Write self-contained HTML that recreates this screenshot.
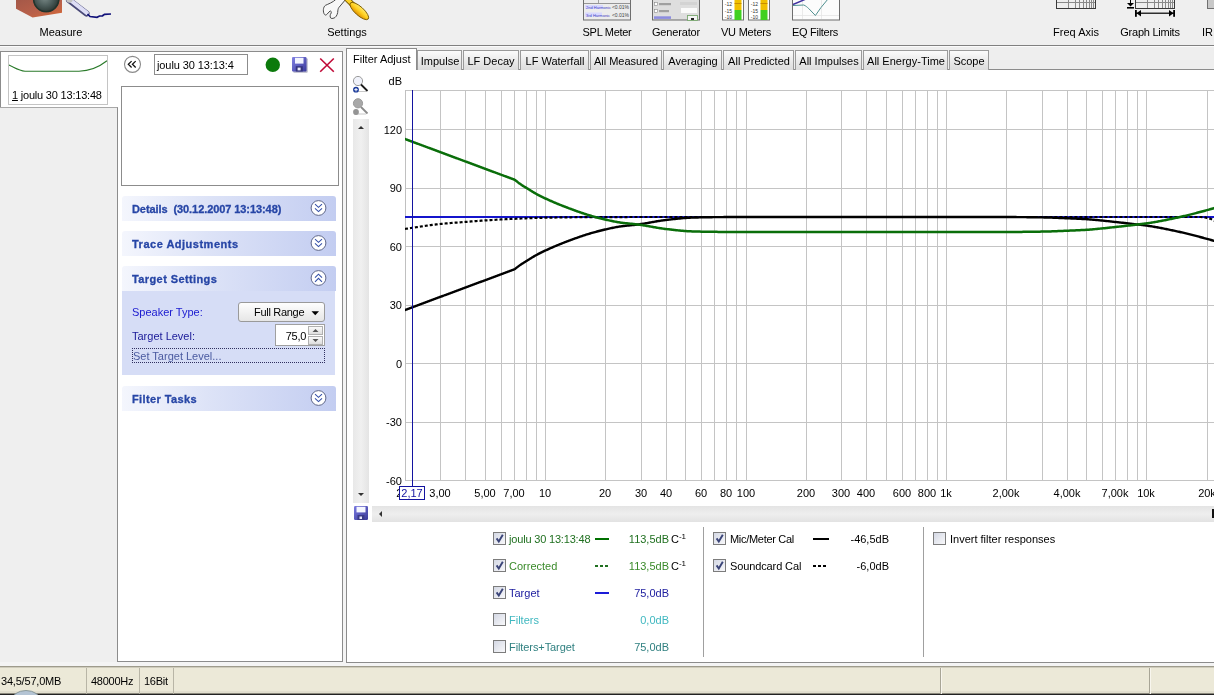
<!DOCTYPE html>
<html><head><meta charset="utf-8"><style>
html,body{margin:0;padding:0;width:1214px;height:695px;overflow:hidden;background:#efefef;position:relative;font-family:"Liberation Sans", sans-serif}
.t{position:absolute;white-space:nowrap;font-family:"Liberation Sans", sans-serif;will-change:transform}
</style></head><body>
<div style="position:absolute;left:0px;top:0px;width:1214px;height:45px;background:#efefef"></div>
<div style="position:absolute;left:0px;top:45px;width:1214px;height:1px;background:#808080"></div>
<div style="position:absolute;left:0px;top:46px;width:1214px;height:620px;background:#f4f4f4"></div>
<div style="position:absolute;left:0px;top:46px;width:1214px;height:1px;background:#fbfbfb"></div>
<div style="position:absolute;left:0px;top:47px;width:1214px;height:4px;background:#ececec"></div>
<div style="position:absolute;left:346px;top:47px;width:868px;height:22px;background:#eeeeee"></div>
<div style="position:absolute;left:0px;top:666px;width:1214px;height:28px;background:#ece9d8"></div>
<div style="position:absolute;left:0px;top:666px;width:1214px;height:1px;background:#9e9b8c"></div>
<div style="position:absolute;left:0px;top:667px;width:1214px;height:1px;background:#cfccbc"></div>
<div style="position:absolute;left:0px;top:691px;width:1214px;height:2px;background:#e2dfcf"></div>
<div style="position:absolute;left:0px;top:693px;width:1214px;height:1px;background:#8a887c"></div>
<div style="position:absolute;left:0px;top:694px;width:1214px;height:1px;background:#222"></div>
<svg style="position:absolute;left:0;top:685px" width="60" height="10"><ellipse cx="26" cy="16" rx="14.5" ry="10.5" fill="#b4c4d4" stroke="#7a8a8a" stroke-width="0.8"/></svg>

<svg style="position:absolute;left:0;top:0" width="1214" height="45">
 <defs>
  <linearGradient id="box" x1="0" y1="0" x2="1" y2="1">
   <stop offset="0" stop-color="#a45848"/><stop offset="0.55" stop-color="#b8604a"/><stop offset="1" stop-color="#d86a36"/></linearGradient>
  <radialGradient id="cone" cx="0.45" cy="0.45" r="0.6">
   <stop offset="0" stop-color="#7a8a88"/><stop offset="0.55" stop-color="#4a5a58"/><stop offset="1" stop-color="#26302c"/></radialGradient>
  <linearGradient id="scr" x1="0" y1="0" x2="0" y2="1">
   <stop offset="0" stop-color="#ffe868"/><stop offset="0.5" stop-color="#ffd020"/><stop offset="1" stop-color="#e09000"/></linearGradient>
 </defs>
 <!-- speaker -->
 <path d="M16 0 L16 8.8 L32.6 17.4 L62 12.8 L62 0 Z" fill="url(#box)"/>
 <circle cx="46.2" cy="-1" r="13.2" fill="url(#cone)"/>
 <circle cx="46.2" cy="-1" r="12.6" fill="none" stroke="#22342c" stroke-width="1.4"/>
 <!-- mic -->
 <path d="M69 0 L86.5 13.5" stroke="#4a4a78" stroke-width="6" stroke-linecap="round"/>
 <path d="M69.5 -0.5 L86.8 12.8" stroke="#dedef6" stroke-width="4" stroke-linecap="round"/>
 <circle cx="69.5" cy="-0.5" r="3.2" fill="#c4c4c4"/>
 <path d="M87.5 14 L90 16.5 L97 17.3 L99.5 16 L102.5 15.8 L104.5 14.3 L111 14" fill="none" stroke="#12127a" stroke-width="1.7"/>
 <!-- settings: wrench -->
 <path d="M336.3 -1 C333 2.5 328 4 325.4 5.4 C323 7 322.8 12 324.4 14.3 C325 15.2 326 15.3 326.6 14.6 L330.2 10.8 C331 11.2 331.6 12 331.2 13 C330 15 329.6 16.8 330.9 18.2 C332 18.8 334 18.2 335 17.5 C337 16 337.8 13 337.8 10.9 C338 9 338.5 7.8 339.3 7 L346 -1 Z" fill="#f8f8f8" stroke="#4a4a4a" stroke-width="1"/>
 <!-- screwdriver -->
 <path d="M345 -3 L354 6" stroke="#7a5a00" stroke-width="5.6" stroke-linecap="round"/>
 <path d="M345 -3 L354 6" stroke="#ffd428" stroke-width="3.8" stroke-linecap="round"/>
 <ellipse cx="359.3" cy="11" rx="12" ry="4.3" transform="rotate(42 359.3 11)" fill="url(#scr)" stroke="#7a5a00" stroke-width="0.9"/>
 <!-- SPL meter -->
 <rect x="583.5" y="-2" width="47" height="22" fill="#ececec" stroke="#6e6e6e"/>
 <rect x="584" y="3" width="46" height="0.8" fill="#808080"/>
 <rect x="598" y="-2" width="0.8" height="5" fill="#909090"/>
 <rect x="585" y="5" width="18" height="4" fill="#d8d8ff"/>
 <rect x="585" y="12.5" width="17" height="4" fill="#d8d8ff"/>
 <text x="586" y="9" font-family="Liberation Sans" font-size="4" fill="#4040c0">2nd Harmonic</text>
 <text x="586" y="16.5" font-family="Liberation Sans" font-size="4" fill="#4040c0">3rd Harmonic</text>
 <text x="629" y="9" font-family="Liberation Sans" font-size="5" fill="#404040" text-anchor="end">&lt;0.01%</text>
 <text x="629" y="16.5" font-family="Liberation Sans" font-size="5" fill="#404040" text-anchor="end">&lt;0.01%</text>
 <!-- generator -->
 <rect x="652.5" y="-2" width="47" height="22" fill="#dedede" stroke="#6a6a6a"/>
 <rect x="654.5" y="2.5" width="3" height="3" fill="#fff" stroke="#8a8a8a" stroke-width="0.6"/>
 <rect x="654.5" y="9.5" width="3" height="3" fill="#fff" stroke="#8a8a8a" stroke-width="0.6"/>
 <rect x="659" y="3" width="12" height="2.2" fill="#555" opacity="0.45"/>
 <rect x="659" y="10" width="10" height="2.2" fill="#555" opacity="0.45"/>
 <rect x="654" y="16.3" width="17" height="2.6" fill="#4848e0" opacity="0.55"/>
 <rect x="680" y="2" width="17" height="3" fill="#cfcfcf" opacity="0.8"/>
 <rect x="681" y="8" width="16" height="5" fill="#fafafa"/>
 <rect x="687.5" y="15.5" width="10" height="5" fill="#f4f4f4" stroke="#7aa870" stroke-width="0.9"/>
 <rect x="691" y="18" width="3" height="2" fill="#222"/>
 <!-- VU meters -->
 <rect x="722.5" y="-2" width="21" height="22" fill="#fff" stroke="#707070"/>
 <rect x="734.5" y="-2" width="7" height="12" fill="#f0c000"/>
 <rect x="734.5" y="10" width="7" height="10" fill="#40d020"/>
 <rect x="734.5" y="3" width="7" height="0.8" fill="#c08000"/>
 <rect x="748.5" y="-2" width="21" height="22" fill="#fff" stroke="#707070"/>
 <rect x="760.5" y="-2" width="7" height="12" fill="#f0c000"/>
 <rect x="760.5" y="10" width="7" height="10" fill="#40d020"/>
 <rect x="760.5" y="3" width="7" height="0.8" fill="#c08000"/>
 <text x="732" y="6" font-family="Liberation Sans" font-size="5" fill="#333" text-anchor="end">-12</text>
 <text x="732" y="12.5" font-family="Liberation Sans" font-size="5" fill="#333" text-anchor="end">-15</text>
 <text x="732" y="19" font-family="Liberation Sans" font-size="5" fill="#333" text-anchor="end">-10</text>
 <text x="758" y="6" font-family="Liberation Sans" font-size="5" fill="#333" text-anchor="end">-12</text>
 <text x="758" y="12.5" font-family="Liberation Sans" font-size="5" fill="#333" text-anchor="end">-15</text>
 <text x="758" y="19" font-family="Liberation Sans" font-size="5" fill="#333" text-anchor="end">-10</text>
 <!-- EQ filters -->
 <rect x="792.5" y="-2" width="47" height="22" fill="#fcfcfc" stroke="#6e6e6e"/>
 <path d="M802.5 0 V19 M821.5 0 V19 M793 15.5 H839" stroke="#e4e4e4" stroke-width="0.8"/>
 <path d="M793 4.5 L806 -1" stroke="#4030a0" stroke-width="1.4"/>
 <path d="M793 5.5 L803.8 5 C806 6 807 7 808.7 8.5 L815.4 15.5 L821 7.5 L828 -1" fill="none" stroke="#509090" stroke-width="1"/>
 <!-- Freq axis -->
 <g fill="#3a3a3a">
  <rect x="1056" y="-1" width="1" height="10"/><rect x="1095" y="-1" width="1" height="10"/><rect x="1056" y="8" width="40" height="1"/>
 </g>
 <g fill="#8a8a8a">
  <rect x="1057" y="2" width="38" height="1"/>
  <rect x="1068" y="0" width="1" height="8"/><rect x="1075" y="0" width="1" height="8"/><rect x="1079" y="0" width="1" height="8"/><rect x="1083" y="0" width="1" height="8"/><rect x="1086" y="0" width="1" height="8"/><rect x="1089" y="0" width="1" height="8"/><rect x="1091" y="0" width="1" height="8"/><rect x="1093" y="0" width="1" height="8"/>
 </g>
 <!-- Graph limits -->
 <g fill="#3a3a3a">
  <rect x="1135" y="-1" width="1" height="10"/><rect x="1174" y="-1" width="1" height="10"/><rect x="1135" y="8" width="40" height="1"/>
 </g>
 <g fill="#8a8a8a">
  <rect x="1136" y="2" width="38" height="1"/>
  <rect x="1147" y="0" width="1" height="8"/><rect x="1154" y="0" width="1" height="8"/><rect x="1158" y="0" width="1" height="8"/><rect x="1162" y="0" width="1" height="8"/><rect x="1165" y="0" width="1" height="8"/><rect x="1168" y="0" width="1" height="8"/><rect x="1170" y="0" width="1" height="8"/><rect x="1172" y="0" width="1" height="8"/>
 </g>
 <rect x="1130" y="-1" width="1" height="4" fill="#000"/>
 <path d="M1127 3 L1134 3 L1130.5 6.5 Z" fill="#000"/>
 <rect x="1127" y="7" width="7" height="1.6" fill="#000"/>
 <rect x="1136" y="12.6" width="38" height="1.2" fill="#000"/>
 <rect x="1135" y="10" width="1.8" height="6.8" fill="#000"/>
 <rect x="1173.2" y="10" width="1.8" height="6.8" fill="#000"/>
 <path d="M1136.5 13.2 L1141 10 L1141 16.5 Z" fill="#000"/>
 <path d="M1173.5 13.2 L1169 10 L1169 16.5 Z" fill="#000"/>
 <!-- IR partial -->
 <rect x="1207.5" y="-2" width="10" height="10.5" fill="#c8c8c8" stroke="#707070"/>
</svg>

<div class="t" style="left:-139.5px;width:400px;text-align:center;top:25.36px;font-size:11px;line-height:14px;color:#000;font-weight:400;letter-spacing:0px;">Measure</div>
<div class="t" style="left:146.5px;width:400px;text-align:center;top:25.36px;font-size:11px;line-height:14px;color:#000;font-weight:400;letter-spacing:0px;">Settings</div>
<div class="t" style="left:406.5px;width:400px;text-align:center;top:25.36px;font-size:11px;line-height:14px;color:#000;font-weight:400;letter-spacing:-0.3px;">SPL Meter</div>
<div class="t" style="left:475.5px;width:400px;text-align:center;top:25.36px;font-size:11px;line-height:14px;color:#000;font-weight:400;letter-spacing:-0.15px;">Generator</div>
<div class="t" style="left:546px;width:400px;text-align:center;top:25.36px;font-size:11px;line-height:14px;color:#000;font-weight:400;letter-spacing:-0.2px;">VU Meters</div>
<div class="t" style="left:615.2px;width:400px;text-align:center;top:25.36px;font-size:11px;line-height:14px;color:#000;font-weight:400;letter-spacing:-0.3px;">EQ Filters</div>
<div class="t" style="left:875.8px;width:400px;text-align:center;top:25.36px;font-size:11px;line-height:14px;color:#000;font-weight:400;letter-spacing:0px;">Freq Axis</div>
<div class="t" style="left:950.2px;width:400px;text-align:center;top:25.36px;font-size:11px;line-height:14px;color:#000;font-weight:400;letter-spacing:-0.25px;">Graph Limits</div>
<div class="t" style="left:1201.5px;top:25.36px;font-size:11px;line-height:14px;color:#000;font-weight:400;letter-spacing:0px;">IR</div>
<div style="position:absolute;left:0px;top:51px;width:343px;height:611px;background:#fff;border-top:1px solid #8c8c8c;border-left:1px solid #8c8c8c;border-right:1px solid #8c8c8c;border-bottom:1px solid #8c8c8c;box-sizing:border-box"></div>
<div style="position:absolute;left:0px;top:107px;width:118px;height:555px;background:#efefef;border-top:1px solid #a8a8a8;border-right:1px solid #8c8c8c;box-sizing:border-box"></div>
<div style="position:absolute;left:8px;top:55px;width:100px;height:50px;background:#fff;border:1px solid #c4c4c4;box-sizing:border-box"></div>
<svg style="position:absolute;left:9;top:56px;left:9px" width="98" height="30"><path d="M0 9.1 C6 11.8 10 14.8 16 15.2 L70 15.2 C80 15 90 11 98 4.7" fill="none" stroke="#2a7a2a" stroke-width="1.1"/></svg>
<div class="t" style="left:12px;top:88.36px;font-size:11px;line-height:14px;color:#000;font-weight:400;letter-spacing:-0.2px;"><u>1</u> joulu 30 13:13:48</div>
<svg style="position:absolute;left:123px;top:55px" width="19" height="19"><circle cx="9.5" cy="9.35" r="8" fill="#fff" stroke="#8a8a8a" stroke-width="1.1"/><path d="M8.6 6.1 L5.3 9.3 L8.6 12.5 M12.7 6.1 L9.4 9.3 L12.7 12.5" fill="none" stroke="#111" stroke-width="1.25"/></svg>
<div style="position:absolute;left:154px;top:54px;width:94px;height:21px;background:#fff;border:1px solid #8c8c8c;box-sizing:border-box"></div>
<div class="t" style="left:157px;top:58.36px;font-size:11px;line-height:14px;color:#000;font-weight:400;letter-spacing:-0.1px;">joulu 30 13:13:4</div>
<svg style="position:absolute;left:262px;top:55px" width="80" height="20">
<circle cx="10.8" cy="9.8" r="7.2" fill="#0c7a0c"/>
<g transform="translate(30,2)">
 <rect x="1.2" y="1.2" width="14.5" height="14.5" rx="1" fill="#2a2a60" opacity="0.35"/>
 <rect x="0" y="0" width="14.5" height="14.5" rx="1" fill="url(#sv2)"/>
 <rect x="3" y="0.8" width="8.5" height="5.8" fill="#f2f4ff"/>
 <rect x="3.8" y="9.2" width="7" height="5.3" fill="#34347e"/>
 <rect x="5.6" y="10.6" width="3" height="2.8" fill="#e8e8f8"/>
</g>
<defs><linearGradient id="sv2" x1="0" y1="0" x2="1" y2="1"><stop offset="0" stop-color="#8282e4"/><stop offset="1" stop-color="#3a3a9c"/></linearGradient></defs>
<path d="M58.2 3.5 L71.8 16.8 M71.8 3.5 L58.2 16.8" stroke="#c00a38" stroke-width="1.6"/>
</svg>
<div style="position:absolute;left:121px;top:86px;width:218px;height:100px;background:#fff;border:1px solid #8c8c8c;box-sizing:border-box"></div>
<div style="position:absolute;left:122px;top:196px;width:214px;height:25px;background:linear-gradient(to right,#f4f6fd 0%,#dde3f7 40%,#c3cdf1 100%);border-radius:3px 3px 0 0"></div>
<div class="t" style="left:131.6px;top:202.36px;font-size:11px;line-height:14px;color:#2746a6;font-weight:700;letter-spacing:-0.08px;-webkit-text-stroke:0.3px #2746a6;">Details&nbsp; (30.12.2007 13:13:48)</div>
<svg style="position:absolute;left:0;top:0" width="343" height="662"><circle cx="318.5" cy="208" r="7.4" fill="#fff" stroke="#5e6688" stroke-width="1"/><path d="M315.0 204.2 L318.5 207.3 L322.0 204.2 M315.0 208.3 L318.5 211.6 L322.0 208.3" fill="none" stroke="#3450a8" stroke-width="1.05"/></svg>
<div style="position:absolute;left:122px;top:231px;width:214px;height:25px;background:linear-gradient(to right,#f4f6fd 0%,#dde3f7 40%,#c3cdf1 100%);border-radius:3px 3px 0 0"></div>
<div class="t" style="left:131.6px;top:237.36px;font-size:11px;line-height:14px;color:#2746a6;font-weight:700;letter-spacing:0.5px;-webkit-text-stroke:0.3px #2746a6;">Trace Adjustments</div>
<svg style="position:absolute;left:0;top:0" width="343" height="662"><circle cx="318.5" cy="243" r="7.4" fill="#fff" stroke="#5e6688" stroke-width="1"/><path d="M315.0 239.2 L318.5 242.3 L322.0 239.2 M315.0 243.3 L318.5 246.6 L322.0 243.3" fill="none" stroke="#3450a8" stroke-width="1.05"/></svg>
<div style="position:absolute;left:122px;top:266px;width:214px;height:25px;background:linear-gradient(to right,#f4f6fd 0%,#dde3f7 40%,#c3cdf1 100%);border-radius:3px 3px 0 0"></div>
<div class="t" style="left:131.6px;top:272.36px;font-size:11px;line-height:14px;color:#2746a6;font-weight:700;letter-spacing:0.4px;-webkit-text-stroke:0.3px #2746a6;">Target Settings</div>
<svg style="position:absolute;left:0;top:0" width="343" height="662"><circle cx="318.5" cy="278" r="7.4" fill="#fff" stroke="#5e6688" stroke-width="1"/><path d="M315.0 277.7 L318.5 274.2 L322.0 277.7 M315.0 281.8 L318.5 278.3 L322.0 281.8" fill="none" stroke="#3450a8" stroke-width="1.05"/></svg>
<div style="position:absolute;left:122px;top:291px;width:213px;height:84px;background:#d6ddf6"></div>
<div class="t" style="left:132px;top:305.36px;font-size:11px;line-height:14px;color:#1a1ad0;font-weight:400;letter-spacing:0px;">Speaker Type:</div>
<div class="t" style="left:132px;top:329.36px;font-size:11px;line-height:14px;color:#1a1a98;font-weight:400;letter-spacing:0px;">Target Level:</div>
<div style="position:absolute;left:238px;top:302px;width:87px;height:20px;background:linear-gradient(#fefefe,#e6e6e6);border:1px solid #9a9a9a;border-radius:3px;box-sizing:border-box"></div>
<div class="t" style="left:253.5px;top:305.36px;font-size:11px;line-height:14px;color:#000;font-weight:400;letter-spacing:-0.3px;">Full Range</div>
<svg style="position:absolute;left:311px;top:311px" width="9" height="6"><path d="M0.5 0.3 L8 0.3 L4.25 4.3 Z" fill="#000"/></svg>
<div style="position:absolute;left:275px;top:324px;width:50px;height:22px;background:#fff;border:1px solid #a0a0a0;box-sizing:border-box"></div>
<div class="t" style="left:-94.5px;width:400px;text-align:right;top:329.36px;font-size:11px;line-height:14px;color:#000;font-weight:400;letter-spacing:-0.3px;">75,0</div>
<div style="position:absolute;left:308px;top:326px;width:15px;height:9px;background:linear-gradient(#fafafa,#dedede);border:1px solid #b0b0b0;box-sizing:border-box"></div>
<div style="position:absolute;left:308px;top:336px;width:15px;height:9px;background:linear-gradient(#fafafa,#dedede);border:1px solid #b0b0b0;box-sizing:border-box"></div>
<svg style="position:absolute;left:308px;top:326px" width="15" height="19"><path d="M4.5 6 L7.5 3 L10.5 6 Z M4.5 13 L7.5 16 L10.5 13 Z" fill="#555"/></svg>
<div style="position:absolute;left:132px;top:348px;width:193px;height:15px;border:1px dotted #303060;box-sizing:border-box"></div>
<div class="t" style="left:133px;top:349.36px;font-size:11px;line-height:14px;color:#4a5aa0;font-weight:400;letter-spacing:0px;">Set Target Level...</div>
<div style="position:absolute;left:122px;top:386px;width:214px;height:25px;background:linear-gradient(to right,#f4f6fd 0%,#dde3f7 40%,#c3cdf1 100%);border-radius:3px 3px 0 0"></div>
<div class="t" style="left:131.6px;top:392.36px;font-size:11px;line-height:14px;color:#2746a6;font-weight:700;letter-spacing:0.4px;-webkit-text-stroke:0.3px #2746a6;">Filter Tasks</div>
<svg style="position:absolute;left:0;top:0" width="343" height="662"><circle cx="318.5" cy="398" r="7.4" fill="#fff" stroke="#5e6688" stroke-width="1"/><path d="M315.0 394.2 L318.5 397.3 L322.0 394.2 M315.0 398.3 L318.5 401.6 L322.0 398.3" fill="none" stroke="#3450a8" stroke-width="1.05"/></svg>
<div style="position:absolute;left:346px;top:69px;width:868px;height:594px;background:#fff"></div>
<div style="position:absolute;left:416px;top:69px;width:798px;height:1px;background:#8c8c8c"></div>
<div style="position:absolute;left:346px;top:48px;width:1px;height:615px;background:#8c8c8c"></div>
<div style="position:absolute;left:346px;top:662px;width:868px;height:1px;background:#8c8c8c"></div>
<div style="position:absolute;left:417px;top:50px;width:45px;height:20px;background:linear-gradient(#fbfbfb,#e8e8e8 60%,#dcdcdc);border:1px solid #9a9a9a;border-bottom:none;box-sizing:border-box"></div>
<div class="t" style="left:239.5px;width:400px;text-align:center;top:54.36px;font-size:11px;line-height:14px;color:#000;font-weight:400;letter-spacing:0px;">Impulse</div>
<div style="position:absolute;left:463px;top:50px;width:56px;height:20px;background:linear-gradient(#fbfbfb,#e8e8e8 60%,#dcdcdc);border:1px solid #9a9a9a;border-bottom:none;box-sizing:border-box"></div>
<div class="t" style="left:291.0px;width:400px;text-align:center;top:54.36px;font-size:11px;line-height:14px;color:#000;font-weight:400;letter-spacing:0px;">LF Decay</div>
<div style="position:absolute;left:520px;top:50px;width:69px;height:20px;background:linear-gradient(#fbfbfb,#e8e8e8 60%,#dcdcdc);border:1px solid #9a9a9a;border-bottom:none;box-sizing:border-box"></div>
<div class="t" style="left:354.5px;width:400px;text-align:center;top:54.36px;font-size:11px;line-height:14px;color:#000;font-weight:400;letter-spacing:0px;">LF Waterfall</div>
<div style="position:absolute;left:590px;top:50px;width:72px;height:20px;background:linear-gradient(#fbfbfb,#e8e8e8 60%,#dcdcdc);border:1px solid #9a9a9a;border-bottom:none;box-sizing:border-box"></div>
<div class="t" style="left:426.0px;width:400px;text-align:center;top:54.36px;font-size:11px;line-height:14px;color:#000;font-weight:400;letter-spacing:0px;">All Measured</div>
<div style="position:absolute;left:663px;top:50px;width:59px;height:20px;background:linear-gradient(#fbfbfb,#e8e8e8 60%,#dcdcdc);border:1px solid #9a9a9a;border-bottom:none;box-sizing:border-box"></div>
<div class="t" style="left:492.5px;width:400px;text-align:center;top:54.36px;font-size:11px;line-height:14px;color:#000;font-weight:400;letter-spacing:0px;">Averaging</div>
<div style="position:absolute;left:723px;top:50px;width:71px;height:20px;background:linear-gradient(#fbfbfb,#e8e8e8 60%,#dcdcdc);border:1px solid #9a9a9a;border-bottom:none;box-sizing:border-box"></div>
<div class="t" style="left:558.5px;width:400px;text-align:center;top:54.36px;font-size:11px;line-height:14px;color:#000;font-weight:400;letter-spacing:0px;">All Predicted</div>
<div style="position:absolute;left:795px;top:50px;width:67px;height:20px;background:linear-gradient(#fbfbfb,#e8e8e8 60%,#dcdcdc);border:1px solid #9a9a9a;border-bottom:none;box-sizing:border-box"></div>
<div class="t" style="left:628.5px;width:400px;text-align:center;top:54.36px;font-size:11px;line-height:14px;color:#000;font-weight:400;letter-spacing:0px;">All Impulses</div>
<div style="position:absolute;left:863px;top:50px;width:85px;height:20px;background:linear-gradient(#fbfbfb,#e8e8e8 60%,#dcdcdc);border:1px solid #9a9a9a;border-bottom:none;box-sizing:border-box"></div>
<div class="t" style="left:705.5px;width:400px;text-align:center;top:54.36px;font-size:11px;line-height:14px;color:#000;font-weight:400;letter-spacing:0px;">All Energy-Time</div>
<div style="position:absolute;left:949px;top:50px;width:40px;height:20px;background:linear-gradient(#fbfbfb,#e8e8e8 60%,#dcdcdc);border:1px solid #9a9a9a;border-bottom:none;box-sizing:border-box"></div>
<div class="t" style="left:769.0px;width:400px;text-align:center;top:54.36px;font-size:11px;line-height:14px;color:#000;font-weight:400;letter-spacing:0px;">Scope</div>
<div style="position:absolute;left:346px;top:48px;width:71px;height:22px;background:#fff;border:1px solid #8c8c8c;border-bottom:none;box-sizing:border-box"></div>
<div class="t" style="left:353px;top:52.36px;font-size:11px;line-height:14px;color:#000;font-weight:400;letter-spacing:0px;">Filter Adjust</div>
<svg style="position:absolute;left:0;top:0" width="1214" height="695">
<rect x="440" y="90" width="1" height="391" fill="#c4c4c4"/>
<rect x="465" y="90" width="1" height="391" fill="#c4c4c4"/>
<rect x="485" y="90" width="1" height="391" fill="#c4c4c4"/>
<rect x="501" y="90" width="1" height="391" fill="#c4c4c4"/>
<rect x="514" y="90" width="1" height="391" fill="#c4c4c4"/>
<rect x="526" y="90" width="1" height="391" fill="#c4c4c4"/>
<rect x="536" y="90" width="1" height="391" fill="#c4c4c4"/>
<rect x="545" y="90" width="1" height="391" fill="#c4c4c4"/>
<rect x="605" y="90" width="1" height="391" fill="#c4c4c4"/>
<rect x="641" y="90" width="1" height="391" fill="#c4c4c4"/>
<rect x="666" y="90" width="1" height="391" fill="#c4c4c4"/>
<rect x="685" y="90" width="1" height="391" fill="#c4c4c4"/>
<rect x="701" y="90" width="1" height="391" fill="#c4c4c4"/>
<rect x="714" y="90" width="1" height="391" fill="#c4c4c4"/>
<rect x="726" y="90" width="1" height="391" fill="#c4c4c4"/>
<rect x="736" y="90" width="1" height="391" fill="#c4c4c4"/>
<rect x="746" y="90" width="1" height="391" fill="#c4c4c4"/>
<rect x="806" y="90" width="1" height="391" fill="#c4c4c4"/>
<rect x="841" y="90" width="1" height="391" fill="#c4c4c4"/>
<rect x="866" y="90" width="1" height="391" fill="#c4c4c4"/>
<rect x="886" y="90" width="1" height="391" fill="#c4c4c4"/>
<rect x="902" y="90" width="1" height="391" fill="#c4c4c4"/>
<rect x="915" y="90" width="1" height="391" fill="#c4c4c4"/>
<rect x="927" y="90" width="1" height="391" fill="#c4c4c4"/>
<rect x="937" y="90" width="1" height="391" fill="#c4c4c4"/>
<rect x="946" y="90" width="1" height="391" fill="#c4c4c4"/>
<rect x="1006" y="90" width="1" height="391" fill="#c4c4c4"/>
<rect x="1042" y="90" width="1" height="391" fill="#c4c4c4"/>
<rect x="1067" y="90" width="1" height="391" fill="#c4c4c4"/>
<rect x="1086" y="90" width="1" height="391" fill="#c4c4c4"/>
<rect x="1102" y="90" width="1" height="391" fill="#c4c4c4"/>
<rect x="1115" y="90" width="1" height="391" fill="#c4c4c4"/>
<rect x="1127" y="90" width="1" height="391" fill="#c4c4c4"/>
<rect x="1137" y="90" width="1" height="391" fill="#c4c4c4"/>
<rect x="1146" y="90" width="1" height="391" fill="#c4c4c4"/>
<rect x="1207" y="90" width="1" height="391" fill="#c4c4c4"/>
<rect x="405" y="480" width="809" height="1" fill="#c4c4c4"/>
<rect x="405" y="422" width="809" height="1" fill="#c4c4c4"/>
<rect x="405" y="363" width="809" height="1" fill="#c4c4c4"/>
<rect x="405" y="305" width="809" height="1" fill="#c4c4c4"/>
<rect x="405" y="246" width="809" height="1" fill="#c4c4c4"/>
<rect x="405" y="188" width="809" height="1" fill="#c4c4c4"/>
<rect x="405" y="129" width="809" height="1" fill="#c4c4c4"/>
<rect x="405" y="90" width="809" height="1" fill="#c4c4c4"/>
<rect x="405" y="90" width="1" height="391" fill="#c0c0c0"/>
<svg x="0" y="0"><clipPath id="gc"><rect x="405" y="90" width="809" height="391"/></clipPath></svg>
<g clip-path="url(#gc)">
<rect x="405" y="216" width="809" height="2" fill="#1414cc"/>
<path d="M405.0,228.90 L406.0,228.76 L407.0,228.62 L408.0,228.47 L409.0,228.32 L410.0,228.18 L411.0,228.03 L412.0,227.88 L413.0,227.73 L414.0,227.58 L415.0,227.42 L416.0,227.27 L417.0,227.12 L418.0,226.97 L419.0,226.81 L420.0,226.66 L421.0,226.51 L422.0,226.36 L423.0,226.21 L424.0,226.06 L425.0,225.92 L426.0,225.77 L427.0,225.63 L428.0,225.48 L429.0,225.35 L430.0,225.21 L431.0,225.07 L432.0,224.94 L433.0,224.81 L434.0,224.68 L435.0,224.56 L436.0,224.44 L437.0,224.33 L438.0,224.21 L439.0,224.10 L440.0,224.00 L441.0,223.90 L442.0,223.80 L443.0,223.71 L444.0,223.61 L445.0,223.52 L446.0,223.43 L447.0,223.34 L448.0,223.26 L449.0,223.18 L450.0,223.09 L451.0,223.01 L452.0,222.93 L453.0,222.85 L454.0,222.78 L455.0,222.70 L456.0,222.62 L457.0,222.55 L458.0,222.47 L459.0,222.40 L460.0,222.32 L461.0,222.25 L462.0,222.17 L463.0,222.09 L464.0,222.02 L465.0,221.94 L466.0,221.86 L467.0,221.78 L468.0,221.70 L469.0,221.62 L470.0,221.54 L471.0,221.47 L472.0,221.39 L473.0,221.31 L474.0,221.23 L475.0,221.15 L476.0,221.08 L477.0,221.00 L478.0,220.92 L479.0,220.85 L480.0,220.78 L481.0,220.71 L482.0,220.64 L483.0,220.57 L484.0,220.50 L485.0,220.43 L486.0,220.37 L487.0,220.30 L488.0,220.24 L489.0,220.18 L490.0,220.12 L491.0,220.05 L492.0,219.99 L493.0,219.93 L494.0,219.87 L495.0,219.81 L496.0,219.75 L497.0,219.69 L498.0,219.64 L499.0,219.58 L500.0,219.52 L501.0,219.47 L502.0,219.41 L503.0,219.36 L504.0,219.31 L505.0,219.25 L506.0,219.20 L507.0,219.15 L508.0,219.10 L509.0,219.05 L510.0,219.00 L511.0,218.96 L512.0,218.91 L513.0,218.87 L514.0,218.82 L515.0,218.78 L516.0,218.74 L517.0,218.69 L518.0,218.65 L519.0,218.61 L520.0,218.56 L521.0,218.52 L522.0,218.48 L523.0,218.44 L524.0,218.39 L525.0,218.35 L526.0,218.31 L527.0,218.27 L528.0,218.23 L529.0,218.19 L530.0,218.16 L531.0,218.12 L532.0,218.08 L533.0,218.05 L534.0,218.01 L535.0,217.98 L536.0,217.95 L537.0,217.92 L538.0,217.89 L539.0,217.86 L540.0,217.83 L541.0,217.80 L542.0,217.78 L543.0,217.75 L544.0,217.73 L545.0,217.71 L546.0,217.69 L547.0,217.67 L548.0,217.66 L549.0,217.64 L550.0,217.62 L551.0,217.60 L552.0,217.58 L553.0,217.56 L554.0,217.55 L555.0,217.53 L556.0,217.51 L557.0,217.50 L558.0,217.48 L559.0,217.46 L560.0,217.44 L561.0,217.43 L562.0,217.41 L563.0,217.40 L564.0,217.38 L565.0,217.37 L566.0,217.35 L567.0,217.34 L568.0,217.32 L569.0,217.31 L570.0,217.29 L571.0,217.28 L572.0,217.27 L573.0,217.25 L574.0,217.24 L575.0,217.23 L576.0,217.22 L577.0,217.20 L578.0,217.19 L579.0,217.18 L580.0,217.17 L581.0,217.16 L582.0,217.15 L583.0,217.14 L584.0,217.13 L585.0,217.12 L586.0,217.12 L587.0,217.11 L588.0,217.10 L589.0,217.09 L590.0,217.09 L591.0,217.08 L592.0,217.08 L593.0,217.07 L594.0,217.07 L595.0,217.06 L596.0,217.06 L597.0,217.06 L598.0,217.05 L599.0,217.05 L600.0,217.05 L601.0,217.05 L602.0,217.05 L603.0,217.05 L604.0,217.05 L605.0,217.04 L606.0,217.04 L607.0,217.04 L608.0,217.04 L609.0,217.04 L610.0,217.04 L611.0,217.04 L612.0,217.04 L613.0,217.04 L614.0,217.04 L615.0,217.04 L616.0,217.03 L617.0,217.03 L618.0,217.03 L619.0,217.03 L620.0,217.03 L621.0,217.03 L622.0,217.03 L623.0,217.03 L624.0,217.03 L625.0,217.03 L626.0,217.03 L627.0,217.03 L628.0,217.03 L629.0,217.02 L630.0,217.02 L631.0,217.02 L632.0,217.02 L633.0,217.02 L634.0,217.02 L635.0,217.02 L636.0,217.02 L637.0,217.02 L638.0,217.02 L639.0,217.02 L640.0,217.02 L641.0,217.02 L642.0,217.02 L643.0,217.02 L644.0,217.01 L645.0,217.01 L646.0,217.01 L647.0,217.01 L648.0,217.01 L649.0,217.01 L650.0,217.01 L651.0,217.01 L652.0,217.01 L653.0,217.01 L654.0,217.01 L655.0,217.01 L656.0,217.01 L657.0,217.01 L658.0,217.01 L659.0,217.01 L660.0,217.01 L661.0,217.01 L662.0,217.01 L663.0,217.01 L664.0,217.01 L665.0,217.01 L666.0,217.01 L667.0,217.01 L668.0,217.00 L669.0,217.00 L670.0,217.00 L671.0,217.00 L672.0,217.00 L673.0,217.00 L674.0,217.00 L675.0,217.00 L676.0,217.00 L677.0,217.00 L678.0,217.00 L679.0,217.00 L680.0,217.00 L681.0,217.00 L682.0,217.00 L683.0,217.00 L684.0,217.00 L685.0,217.00 L686.0,217.00 L687.0,217.00 L688.0,217.00 L689.0,217.00 L690.0,217.00 L691.0,217.00 L692.0,217.00 L693.0,217.00 L694.0,217.00 L695.0,217.00 L696.0,217.00 L697.0,217.00 L698.0,217.00 L699.0,217.00 L700.0,217.00 L701.0,217.00 L702.0,217.00 L703.0,217.00 L704.0,217.00 L705.0,217.00 L706.0,217.00 L707.0,217.00 L708.0,217.00 L709.0,217.00 L710.0,217.00 L711.0,217.00 L712.0,217.00 L713.0,217.00 L714.0,217.00 L715.0,217.00 L716.0,217.00 L717.0,217.00 L718.0,217.00 L719.0,217.00 L720.0,217.00 L721.0,217.00 L722.0,217.00 L723.0,217.00 L724.0,217.00 L725.0,217.00 L726.0,217.00 L727.0,217.00 L728.0,217.00 L729.0,217.00 L730.0,217.00 L731.0,217.00 L732.0,217.00 L733.0,217.00 L734.0,217.00 L735.0,217.00 L736.0,217.00 L737.0,217.00 L738.0,217.00 L739.0,217.00 L740.0,217.00 L741.0,217.00 L742.0,217.00 L743.0,217.00 L744.0,217.00 L745.0,217.00 L746.0,217.00 L747.0,217.00 L748.0,217.00 L749.0,217.00 L750.0,217.00 L751.0,217.00 L752.0,217.00 L753.0,217.00 L754.0,217.00 L755.0,217.00 L756.0,217.00 L757.0,217.00 L758.0,217.00 L759.0,217.00 L760.0,217.00 L761.0,217.00 L762.0,217.00 L763.0,217.00 L764.0,217.00 L765.0,217.00 L766.0,217.00 L767.0,217.00 L768.0,217.00 L769.0,217.00 L770.0,217.00 L771.0,217.00 L772.0,217.00 L773.0,217.00 L774.0,217.00 L775.0,217.00 L776.0,217.00 L777.0,217.00 L778.0,217.00 L779.0,217.00 L780.0,217.00 L781.0,217.00 L782.0,217.00 L783.0,217.00 L784.0,217.00 L785.0,217.00 L786.0,217.00 L787.0,217.00 L788.0,217.00 L789.0,217.00 L790.0,217.00 L791.0,217.00 L792.0,217.00 L793.0,217.00 L794.0,217.00 L795.0,217.00 L796.0,217.00 L797.0,217.00 L798.0,217.00 L799.0,217.00 L800.0,217.00 L801.0,217.00 L802.0,217.00 L803.0,217.00 L804.0,217.00 L805.0,217.00 L806.0,217.00 L807.0,217.00 L808.0,217.00 L809.0,217.00 L810.0,217.00 L811.0,217.00 L812.0,217.00 L813.0,217.00 L814.0,217.00 L815.0,217.00 L816.0,217.00 L817.0,217.00 L818.0,217.00 L819.0,217.00 L820.0,217.00 L821.0,217.00 L822.0,217.00 L823.0,217.00 L824.0,217.00 L825.0,217.00 L826.0,217.00 L827.0,217.00 L828.0,217.00 L829.0,217.00 L830.0,217.00 L831.0,217.00 L832.0,217.00 L833.0,217.00 L834.0,217.00 L835.0,217.00 L836.0,217.00 L837.0,217.00 L838.0,217.00 L839.0,217.00 L840.0,217.00 L841.0,217.00 L842.0,217.00 L843.0,217.00 L844.0,217.00 L845.0,217.00 L846.0,217.00 L847.0,217.00 L848.0,217.00 L849.0,217.00 L850.0,217.00 L851.0,217.00 L852.0,217.00 L853.0,217.00 L854.0,217.00 L855.0,217.00 L856.0,217.00 L857.0,217.00 L858.0,217.00 L859.0,217.00 L860.0,217.00 L861.0,217.00 L862.0,217.00 L863.0,217.00 L864.0,217.00 L865.0,217.00 L866.0,217.00 L867.0,217.00 L868.0,217.00 L869.0,217.00 L870.0,217.00 L871.0,217.00 L872.0,217.00 L873.0,217.00 L874.0,217.00 L875.0,217.00 L876.0,217.00 L877.0,217.00 L878.0,217.00 L879.0,217.00 L880.0,217.00 L881.0,217.00 L882.0,217.00 L883.0,217.00 L884.0,217.00 L885.0,217.00 L886.0,217.00 L887.0,217.00 L888.0,217.00 L889.0,217.00 L890.0,217.00 L891.0,217.00 L892.0,217.00 L893.0,217.00 L894.0,217.00 L895.0,217.00 L896.0,217.00 L897.0,217.00 L898.0,217.00 L899.0,217.00 L900.0,217.00 L901.0,217.00 L902.0,217.00 L903.0,217.00 L904.0,217.00 L905.0,217.00 L906.0,217.00 L907.0,217.00 L908.0,217.00 L909.0,217.00 L910.0,217.00 L911.0,217.00 L912.0,217.00 L913.0,217.00 L914.0,217.00 L915.0,217.00 L916.0,217.00 L917.0,217.00 L918.0,217.00 L919.0,217.00 L920.0,217.00 L921.0,217.00 L922.0,217.00 L923.0,217.00 L924.0,217.00 L925.0,217.00 L926.0,217.00 L927.0,217.00 L928.0,217.00 L929.0,217.00 L930.0,217.00 L931.0,217.00 L932.0,217.00 L933.0,217.00 L934.0,217.00 L935.0,217.00 L936.0,217.00 L937.0,217.00 L938.0,217.00 L939.0,217.00 L940.0,217.00 L941.0,217.00 L942.0,217.00 L943.0,217.00 L944.0,217.00 L945.0,217.00 L946.0,217.00 L947.0,217.00 L948.0,217.00 L949.0,217.00 L950.0,217.00 L951.0,217.00 L952.0,217.00 L953.0,217.00 L954.0,217.00 L955.0,217.00 L956.0,217.00 L957.0,217.00 L958.0,217.00 L959.0,217.00 L960.0,217.00 L961.0,217.00 L962.0,217.00 L963.0,217.00 L964.0,217.00 L965.0,217.00 L966.0,217.00 L967.0,217.00 L968.0,217.00 L969.0,217.00 L970.0,217.00 L971.0,217.00 L972.0,217.00 L973.0,217.00 L974.0,217.00 L975.0,217.00 L976.0,217.00 L977.0,217.00 L978.0,217.00 L979.0,217.00 L980.0,217.00 L981.0,217.00 L982.0,217.00 L983.0,217.00 L984.0,217.00 L985.0,217.00 L986.0,217.00 L987.0,217.00 L988.0,217.00 L989.0,217.00 L990.0,217.00 L991.0,217.00 L992.0,217.00 L993.0,217.00 L994.0,217.00 L995.0,217.00 L996.0,217.00 L997.0,217.00 L998.0,217.00 L999.0,217.00 L1000.0,217.00 L1001.0,217.00 L1002.0,217.00 L1003.0,217.00 L1004.0,217.00 L1005.0,217.00 L1006.0,217.00 L1007.0,217.00 L1008.0,217.00 L1009.0,217.00 L1010.0,217.00 L1011.0,217.00 L1012.0,217.00 L1013.0,217.00 L1014.0,217.00 L1015.0,217.00 L1016.0,217.00 L1017.0,217.00 L1018.0,217.00 L1019.0,217.00 L1020.0,217.00 L1021.0,217.00 L1022.0,217.00 L1023.0,217.00 L1024.0,217.00 L1025.0,217.00 L1026.0,217.00 L1027.0,217.00 L1028.0,217.00 L1029.0,217.00 L1030.0,217.00 L1031.0,217.00 L1032.0,217.00 L1033.0,217.00 L1034.0,217.00 L1035.0,217.00 L1036.0,217.00 L1037.0,217.00 L1038.0,217.00 L1039.0,217.00 L1040.0,217.00 L1041.0,217.00 L1042.0,217.00 L1043.0,217.00 L1044.0,217.00 L1045.0,217.00 L1046.0,217.00 L1047.0,217.00 L1048.0,217.00 L1049.0,217.00 L1050.0,217.00 L1051.0,217.00 L1052.0,217.00 L1053.0,217.00 L1054.0,217.00 L1055.0,217.00 L1056.0,217.00 L1057.0,217.00 L1058.0,217.00 L1059.0,217.00 L1060.0,217.00 L1061.0,217.00 L1062.0,217.00 L1063.0,217.00 L1064.0,217.00 L1065.0,217.00 L1066.0,217.00 L1067.0,217.00 L1068.0,217.00 L1069.0,217.00 L1070.0,217.00 L1071.0,217.00 L1072.0,217.00 L1073.0,217.00 L1074.0,217.00 L1075.0,217.00 L1076.0,217.00 L1077.0,217.00 L1078.0,217.00 L1079.0,217.00 L1080.0,217.00 L1081.0,217.00 L1082.0,217.00 L1083.0,217.00 L1084.0,217.00 L1085.0,217.00 L1086.0,217.00 L1087.0,217.00 L1088.0,217.00 L1089.0,217.00 L1090.0,217.00 L1091.0,217.00 L1092.0,217.00 L1093.0,217.00 L1094.0,217.00 L1095.0,217.00 L1096.0,217.00 L1097.0,217.00 L1098.0,217.00 L1099.0,217.00 L1100.0,217.00 L1101.0,217.00 L1102.0,217.00 L1103.0,217.00 L1104.0,217.00 L1105.0,217.00 L1106.0,217.00 L1107.0,217.00 L1108.0,217.00 L1109.0,217.00 L1110.0,217.00 L1111.0,217.00 L1112.0,217.00 L1113.0,217.00 L1114.0,217.00 L1115.0,217.00 L1116.0,217.00 L1117.0,217.00 L1118.0,217.00 L1119.0,217.00 L1120.0,217.00 L1121.0,217.00 L1122.0,217.00 L1123.0,217.00 L1124.0,217.00 L1125.0,217.00 L1126.0,217.00 L1127.0,217.00 L1128.0,217.00 L1129.0,217.00 L1130.0,217.00 L1131.0,217.00 L1132.0,217.00 L1133.0,217.00 L1134.0,217.00 L1135.0,217.00 L1136.0,217.00 L1137.0,217.00 L1138.0,217.00 L1139.0,217.00 L1140.0,217.00 L1141.0,217.00 L1142.0,217.00 L1143.0,217.00 L1144.0,217.00 L1145.0,217.00 L1146.0,217.00 L1147.0,217.00 L1148.0,217.00 L1149.0,217.00 L1150.0,217.00 L1151.0,217.00 L1152.0,217.00 L1153.0,217.00 L1154.0,217.00 L1155.0,217.00 L1156.0,217.00 L1157.0,217.00 L1158.0,217.00 L1159.0,217.00 L1160.0,217.00 L1161.0,217.00 L1162.0,217.00 L1163.0,217.00 L1164.0,217.00 L1165.0,217.00 L1166.0,217.00 L1167.0,217.00 L1168.0,217.00 L1169.0,217.00 L1170.0,217.00 L1171.0,217.00 L1172.0,217.00 L1173.0,217.00 L1174.0,217.00 L1175.0,217.00 L1176.0,217.00 L1177.0,217.00 L1178.0,217.00 L1179.0,217.00 L1180.0,217.00 L1181.0,217.00 L1182.0,217.00 L1183.0,217.00 L1184.0,217.00 L1185.0,217.00 L1186.0,217.00 L1187.0,217.00 L1188.0,217.00 L1189.0,217.00 L1190.0,217.00 L1191.0,217.00 L1192.0,217.00 L1193.0,217.00 L1194.0,217.00 L1195.0,217.00 L1196.0,217.00 L1197.0,217.00 L1198.0,217.00 L1199.0,217.00 L1200.0,217.00 L1201.0,217.02 L1202.0,217.08 L1203.0,217.18 L1204.0,217.31 L1205.0,217.46 L1206.0,217.62 L1207.0,217.81 L1208.0,218.00 L1209.0,218.25 L1210.0,218.60 L1211.0,219.03 L1212.0,219.51 L1213.0,220.02 L1214.0,220.53 L1215.0,221.04 L1216.0,221.50" fill="none" stroke="#000" stroke-width="2.2" stroke-dasharray="3 2"/>
<path d="M404.0,310.00 L405.0,310.00 L406.0,309.63 L407.0,309.26 L408.0,308.88 L409.0,308.51 L410.0,308.14 L411.0,307.77 L412.0,307.40 L413.0,307.03 L414.0,306.65 L415.0,306.28 L416.0,305.91 L417.0,305.54 L418.0,305.17 L419.0,304.80 L420.0,304.42 L421.0,304.05 L422.0,303.68 L423.0,303.31 L424.0,302.94 L425.0,302.57 L426.0,302.19 L427.0,301.82 L428.0,301.45 L429.0,301.08 L430.0,300.71 L431.0,300.34 L432.0,299.96 L433.0,299.59 L434.0,299.22 L435.0,298.85 L436.0,298.48 L437.0,298.11 L438.0,297.73 L439.0,297.36 L440.0,296.99 L441.0,296.62 L442.0,296.25 L443.0,295.88 L444.0,295.50 L445.0,295.13 L446.0,294.76 L447.0,294.39 L448.0,294.02 L449.0,293.65 L450.0,293.27 L451.0,292.90 L452.0,292.53 L453.0,292.16 L454.0,291.79 L455.0,291.42 L456.0,291.04 L457.0,290.67 L458.0,290.30 L459.0,289.93 L460.0,289.56 L461.0,289.19 L462.0,288.81 L463.0,288.44 L464.0,288.07 L465.0,287.70 L466.0,287.33 L467.0,286.96 L468.0,286.58 L469.0,286.21 L470.0,285.84 L471.0,285.47 L472.0,285.10 L473.0,284.73 L474.0,284.35 L475.0,283.98 L476.0,283.61 L477.0,283.24 L478.0,282.87 L479.0,282.49 L480.0,282.12 L481.0,281.75 L482.0,281.38 L483.0,281.01 L484.0,280.64 L485.0,280.26 L486.0,279.89 L487.0,279.52 L488.0,279.15 L489.0,278.78 L490.0,278.41 L491.0,278.03 L492.0,277.66 L493.0,277.29 L494.0,276.92 L495.0,276.55 L496.0,276.18 L497.0,275.80 L498.0,275.43 L499.0,275.06 L500.0,274.69 L501.0,274.32 L502.0,273.95 L503.0,273.57 L504.0,273.20 L505.0,272.83 L506.0,272.46 L507.0,272.09 L508.0,271.72 L509.0,271.34 L510.0,270.97 L511.0,270.60 L512.0,270.23 L513.0,269.86 L514.0,269.49 L515.0,268.92 L516.0,268.16 L517.0,267.39 L518.0,266.62 L519.0,265.87 L520.0,265.15 L521.0,264.46 L522.0,263.80 L523.0,263.16 L524.0,262.54 L525.0,261.92 L526.0,261.31 L527.0,260.69 L528.0,260.07 L529.0,259.44 L530.0,258.82 L531.0,258.20 L532.0,257.59 L533.0,256.98 L534.0,256.39 L535.0,255.81 L536.0,255.24 L537.0,254.69 L538.0,254.16 L539.0,253.64 L540.0,253.13 L541.0,252.63 L542.0,252.14 L543.0,251.65 L544.0,251.18 L545.0,250.71 L546.0,250.25 L547.0,249.79 L548.0,249.33 L549.0,248.88 L550.0,248.44 L551.0,247.99 L552.0,247.55 L553.0,247.12 L554.0,246.69 L555.0,246.26 L556.0,245.84 L557.0,245.42 L558.0,245.01 L559.0,244.60 L560.0,244.19 L561.0,243.79 L562.0,243.39 L563.0,243.00 L564.0,242.61 L565.0,242.22 L566.0,241.84 L567.0,241.46 L568.0,241.08 L569.0,240.70 L570.0,240.33 L571.0,239.96 L572.0,239.59 L573.0,239.22 L574.0,238.85 L575.0,238.49 L576.0,238.13 L577.0,237.77 L578.0,237.42 L579.0,237.07 L580.0,236.73 L581.0,236.38 L582.0,236.04 L583.0,235.71 L584.0,235.38 L585.0,235.05 L586.0,234.73 L587.0,234.42 L588.0,234.10 L589.0,233.80 L590.0,233.50 L591.0,233.20 L592.0,232.91 L593.0,232.62 L594.0,232.34 L595.0,232.06 L596.0,231.79 L597.0,231.52 L598.0,231.25 L599.0,230.99 L600.0,230.74 L601.0,230.49 L602.0,230.24 L603.0,230.00 L604.0,229.76 L605.0,229.53 L606.0,229.30 L607.0,229.07 L608.0,228.85 L609.0,228.62 L610.0,228.40 L611.0,228.18 L612.0,227.97 L613.0,227.76 L614.0,227.55 L615.0,227.36 L616.0,227.17 L617.0,226.99 L618.0,226.81 L619.0,226.65 L620.0,226.50 L621.0,226.36 L622.0,226.23 L623.0,226.10 L624.0,225.99 L625.0,225.87 L626.0,225.77 L627.0,225.66 L628.0,225.56 L629.0,225.46 L630.0,225.36 L631.0,225.26 L632.0,225.16 L633.0,225.06 L634.0,224.96 L635.0,224.85 L636.0,224.73 L637.0,224.61 L638.0,224.49 L639.0,224.35 L640.0,224.21 L641.0,224.06 L642.0,223.91 L643.0,223.75 L644.0,223.59 L645.0,223.42 L646.0,223.25 L647.0,223.07 L648.0,222.90 L649.0,222.72 L650.0,222.54 L651.0,222.36 L652.0,222.18 L653.0,222.00 L654.0,221.82 L655.0,221.65 L656.0,221.47 L657.0,221.30 L658.0,221.14 L659.0,220.97 L660.0,220.81 L661.0,220.66 L662.0,220.51 L663.0,220.37 L664.0,220.23 L665.0,220.11 L666.0,219.99 L667.0,219.87 L668.0,219.76 L669.0,219.64 L670.0,219.52 L671.0,219.41 L672.0,219.29 L673.0,219.18 L674.0,219.07 L675.0,218.95 L676.0,218.85 L677.0,218.74 L678.0,218.63 L679.0,218.53 L680.0,218.44 L681.0,218.34 L682.0,218.25 L683.0,218.16 L684.0,218.08 L685.0,218.00 L686.0,217.93 L687.0,217.86 L688.0,217.80 L689.0,217.74 L690.0,217.69 L691.0,217.65 L692.0,217.61 L693.0,217.58 L694.0,217.55 L695.0,217.52 L696.0,217.49 L697.0,217.46 L698.0,217.44 L699.0,217.41 L700.0,217.39 L701.0,217.37 L702.0,217.34 L703.0,217.32 L704.0,217.30 L705.0,217.29 L706.0,217.27 L707.0,217.25 L708.0,217.24 L709.0,217.22 L710.0,217.21 L711.0,217.19 L712.0,217.18 L713.0,217.17 L714.0,217.16 L715.0,217.15 L716.0,217.14 L717.0,217.13 L718.0,217.12 L719.0,217.11 L720.0,217.10 L721.0,217.10 L722.0,217.09 L723.0,217.08 L724.0,217.07 L725.0,217.06 L726.0,217.06 L727.0,217.05 L728.0,217.04 L729.0,217.04 L730.0,217.03 L731.0,217.03 L732.0,217.02 L733.0,217.02 L734.0,217.01 L735.0,217.01 L736.0,217.01 L737.0,217.00 L738.0,217.00 L739.0,217.00 L740.0,217.00 L741.0,217.00 L742.0,217.00 L743.0,217.00 L744.0,217.00 L745.0,217.00 L746.0,217.00 L747.0,217.00 L748.0,217.00 L749.0,217.00 L750.0,217.00 L751.0,217.00 L752.0,217.00 L753.0,217.00 L754.0,217.00 L755.0,217.00 L756.0,217.00 L757.0,217.00 L758.0,217.00 L759.0,217.00 L760.0,217.00 L761.0,217.00 L762.0,217.00 L763.0,217.00 L764.0,217.00 L765.0,217.00 L766.0,217.00 L767.0,217.00 L768.0,217.00 L769.0,217.00 L770.0,217.00 L771.0,217.00 L772.0,217.00 L773.0,217.00 L774.0,217.00 L775.0,217.00 L776.0,217.00 L777.0,217.00 L778.0,217.00 L779.0,217.00 L780.0,217.00 L781.0,217.00 L782.0,217.00 L783.0,217.00 L784.0,217.00 L785.0,217.00 L786.0,217.00 L787.0,217.00 L788.0,217.00 L789.0,217.00 L790.0,217.00 L791.0,217.00 L792.0,217.00 L793.0,217.00 L794.0,217.00 L795.0,217.00 L796.0,217.00 L797.0,217.00 L798.0,217.00 L799.0,217.00 L800.0,217.00 L801.0,217.00 L802.0,217.00 L803.0,217.00 L804.0,217.00 L805.0,217.00 L806.0,217.00 L807.0,217.00 L808.0,217.00 L809.0,217.00 L810.0,217.00 L811.0,217.00 L812.0,217.00 L813.0,217.00 L814.0,217.00 L815.0,217.00 L816.0,217.00 L817.0,217.00 L818.0,217.00 L819.0,217.00 L820.0,217.00 L821.0,217.00 L822.0,217.00 L823.0,217.00 L824.0,217.00 L825.0,217.00 L826.0,217.00 L827.0,217.00 L828.0,217.00 L829.0,217.00 L830.0,217.00 L831.0,217.00 L832.0,217.00 L833.0,217.00 L834.0,217.00 L835.0,217.00 L836.0,217.00 L837.0,217.00 L838.0,217.00 L839.0,217.00 L840.0,217.00 L841.0,217.00 L842.0,217.00 L843.0,217.00 L844.0,217.00 L845.0,217.00 L846.0,217.00 L847.0,217.00 L848.0,217.00 L849.0,217.00 L850.0,217.00 L851.0,217.00 L852.0,217.00 L853.0,217.00 L854.0,217.00 L855.0,217.00 L856.0,217.00 L857.0,217.00 L858.0,217.00 L859.0,217.00 L860.0,217.00 L861.0,217.00 L862.0,217.00 L863.0,217.00 L864.0,217.00 L865.0,217.00 L866.0,217.00 L867.0,217.00 L868.0,217.00 L869.0,217.00 L870.0,217.00 L871.0,217.00 L872.0,217.00 L873.0,217.00 L874.0,217.00 L875.0,217.00 L876.0,217.00 L877.0,217.00 L878.0,217.00 L879.0,217.00 L880.0,217.00 L881.0,217.00 L882.0,217.00 L883.0,217.00 L884.0,217.00 L885.0,217.00 L886.0,217.00 L887.0,217.00 L888.0,217.00 L889.0,217.00 L890.0,217.00 L891.0,217.00 L892.0,217.00 L893.0,217.00 L894.0,217.00 L895.0,217.00 L896.0,217.00 L897.0,217.00 L898.0,217.00 L899.0,217.00 L900.0,217.00 L901.0,217.00 L902.0,217.00 L903.0,217.00 L904.0,217.00 L905.0,217.00 L906.0,217.00 L907.0,217.00 L908.0,217.00 L909.0,217.00 L910.0,217.00 L911.0,217.00 L912.0,217.00 L913.0,217.00 L914.0,217.00 L915.0,217.00 L916.0,217.00 L917.0,217.00 L918.0,217.00 L919.0,217.00 L920.0,217.00 L921.0,217.00 L922.0,217.00 L923.0,217.00 L924.0,217.00 L925.0,217.00 L926.0,217.00 L927.0,217.00 L928.0,217.00 L929.0,217.00 L930.0,217.00 L931.0,217.00 L932.0,217.00 L933.0,217.00 L934.0,217.00 L935.0,217.00 L936.0,217.00 L937.0,217.00 L938.0,217.00 L939.0,217.00 L940.0,217.00 L941.0,217.00 L942.0,217.00 L943.0,217.00 L944.0,217.00 L945.0,217.00 L946.0,217.00 L947.0,217.00 L948.0,217.00 L949.0,217.00 L950.0,217.00 L951.0,217.00 L952.0,217.00 L953.0,217.00 L954.0,217.00 L955.0,217.00 L956.0,217.00 L957.0,217.00 L958.0,217.00 L959.0,217.00 L960.0,217.00 L961.0,217.00 L962.0,217.00 L963.0,217.00 L964.0,217.00 L965.0,217.00 L966.0,217.00 L967.0,217.00 L968.0,217.00 L969.0,217.00 L970.0,217.00 L971.0,217.00 L972.0,217.00 L973.0,217.00 L974.0,217.00 L975.0,217.00 L976.0,217.00 L977.0,217.00 L978.0,217.00 L979.0,217.00 L980.0,217.00 L981.0,217.00 L982.0,217.00 L983.0,217.00 L984.0,217.00 L985.0,217.00 L986.0,217.00 L987.0,217.00 L988.0,217.00 L989.0,217.00 L990.0,217.00 L991.0,217.00 L992.0,217.00 L993.0,217.00 L994.0,217.00 L995.0,217.00 L996.0,217.00 L997.0,217.00 L998.0,217.00 L999.0,217.00 L1000.0,217.00 L1001.0,217.00 L1002.0,217.00 L1003.0,217.00 L1004.0,217.00 L1005.0,217.01 L1006.0,217.01 L1007.0,217.01 L1008.0,217.02 L1009.0,217.02 L1010.0,217.03 L1011.0,217.03 L1012.0,217.04 L1013.0,217.05 L1014.0,217.05 L1015.0,217.06 L1016.0,217.07 L1017.0,217.08 L1018.0,217.09 L1019.0,217.09 L1020.0,217.10 L1021.0,217.11 L1022.0,217.12 L1023.0,217.13 L1024.0,217.15 L1025.0,217.16 L1026.0,217.17 L1027.0,217.18 L1028.0,217.19 L1029.0,217.21 L1030.0,217.22 L1031.0,217.23 L1032.0,217.25 L1033.0,217.26 L1034.0,217.27 L1035.0,217.29 L1036.0,217.30 L1037.0,217.32 L1038.0,217.33 L1039.0,217.35 L1040.0,217.36 L1041.0,217.38 L1042.0,217.39 L1043.0,217.41 L1044.0,217.43 L1045.0,217.45 L1046.0,217.47 L1047.0,217.50 L1048.0,217.53 L1049.0,217.56 L1050.0,217.59 L1051.0,217.62 L1052.0,217.66 L1053.0,217.69 L1054.0,217.73 L1055.0,217.77 L1056.0,217.81 L1057.0,217.85 L1058.0,217.89 L1059.0,217.94 L1060.0,217.98 L1061.0,218.02 L1062.0,218.07 L1063.0,218.11 L1064.0,218.15 L1065.0,218.19 L1066.0,218.24 L1067.0,218.28 L1068.0,218.32 L1069.0,218.36 L1070.0,218.40 L1071.0,218.44 L1072.0,218.48 L1073.0,218.53 L1074.0,218.57 L1075.0,218.61 L1076.0,218.66 L1077.0,218.70 L1078.0,218.75 L1079.0,218.79 L1080.0,218.84 L1081.0,218.89 L1082.0,218.94 L1083.0,219.00 L1084.0,219.05 L1085.0,219.11 L1086.0,219.17 L1087.0,219.23 L1088.0,219.30 L1089.0,219.37 L1090.0,219.45 L1091.0,219.53 L1092.0,219.61 L1093.0,219.70 L1094.0,219.79 L1095.0,219.88 L1096.0,219.98 L1097.0,220.07 L1098.0,220.17 L1099.0,220.27 L1100.0,220.37 L1101.0,220.46 L1102.0,220.56 L1103.0,220.66 L1104.0,220.76 L1105.0,220.86 L1106.0,220.96 L1107.0,221.07 L1108.0,221.18 L1109.0,221.29 L1110.0,221.40 L1111.0,221.51 L1112.0,221.62 L1113.0,221.73 L1114.0,221.84 L1115.0,221.95 L1116.0,222.05 L1117.0,222.16 L1118.0,222.27 L1119.0,222.38 L1120.0,222.48 L1121.0,222.59 L1122.0,222.70 L1123.0,222.81 L1124.0,222.92 L1125.0,223.03 L1126.0,223.14 L1127.0,223.25 L1128.0,223.37 L1129.0,223.48 L1130.0,223.60 L1131.0,223.72 L1132.0,223.84 L1133.0,223.96 L1134.0,224.08 L1135.0,224.20 L1136.0,224.32 L1137.0,224.44 L1138.0,224.56 L1139.0,224.68 L1140.0,224.79 L1141.0,224.91 L1142.0,225.02 L1143.0,225.14 L1144.0,225.27 L1145.0,225.39 L1146.0,225.53 L1147.0,225.67 L1148.0,225.82 L1149.0,225.97 L1150.0,226.12 L1151.0,226.28 L1152.0,226.44 L1153.0,226.61 L1154.0,226.78 L1155.0,226.95 L1156.0,227.13 L1157.0,227.30 L1158.0,227.49 L1159.0,227.67 L1160.0,227.86 L1161.0,228.05 L1162.0,228.24 L1163.0,228.43 L1164.0,228.63 L1165.0,228.83 L1166.0,229.03 L1167.0,229.23 L1168.0,229.44 L1169.0,229.64 L1170.0,229.85 L1171.0,230.06 L1172.0,230.27 L1173.0,230.48 L1174.0,230.70 L1175.0,230.91 L1176.0,231.13 L1177.0,231.34 L1178.0,231.56 L1179.0,231.78 L1180.0,232.00 L1181.0,232.22 L1182.0,232.45 L1183.0,232.68 L1184.0,232.91 L1185.0,233.14 L1186.0,233.38 L1187.0,233.62 L1188.0,233.87 L1189.0,234.12 L1190.0,234.37 L1191.0,234.62 L1192.0,234.87 L1193.0,235.13 L1194.0,235.39 L1195.0,235.65 L1196.0,235.91 L1197.0,236.18 L1198.0,236.44 L1199.0,236.71 L1200.0,236.98 L1201.0,237.24 L1202.0,237.51 L1203.0,237.78 L1204.0,238.05 L1205.0,238.32 L1206.0,238.59 L1207.0,238.86 L1208.0,239.14 L1209.0,239.41 L1210.0,239.69 L1211.0,239.97 L1212.0,240.26 L1213.0,240.54 L1214.0,240.83 L1215.0,241.12 L1216.0,241.40" fill="none" stroke="#000" stroke-width="2.4"/>
<path d="M404.0,139.00 L405.0,139.00 L406.0,139.37 L407.0,139.74 L408.0,140.12 L409.0,140.49 L410.0,140.86 L411.0,141.23 L412.0,141.60 L413.0,141.97 L414.0,142.35 L415.0,142.72 L416.0,143.09 L417.0,143.46 L418.0,143.83 L419.0,144.20 L420.0,144.58 L421.0,144.95 L422.0,145.32 L423.0,145.69 L424.0,146.06 L425.0,146.43 L426.0,146.81 L427.0,147.18 L428.0,147.55 L429.0,147.92 L430.0,148.29 L431.0,148.66 L432.0,149.04 L433.0,149.41 L434.0,149.78 L435.0,150.15 L436.0,150.52 L437.0,150.89 L438.0,151.27 L439.0,151.64 L440.0,152.01 L441.0,152.38 L442.0,152.75 L443.0,153.12 L444.0,153.50 L445.0,153.87 L446.0,154.24 L447.0,154.61 L448.0,154.98 L449.0,155.35 L450.0,155.73 L451.0,156.10 L452.0,156.47 L453.0,156.84 L454.0,157.21 L455.0,157.58 L456.0,157.96 L457.0,158.33 L458.0,158.70 L459.0,159.07 L460.0,159.44 L461.0,159.81 L462.0,160.19 L463.0,160.56 L464.0,160.93 L465.0,161.30 L466.0,161.67 L467.0,162.04 L468.0,162.42 L469.0,162.79 L470.0,163.16 L471.0,163.53 L472.0,163.90 L473.0,164.27 L474.0,164.65 L475.0,165.02 L476.0,165.39 L477.0,165.76 L478.0,166.13 L479.0,166.51 L480.0,166.88 L481.0,167.25 L482.0,167.62 L483.0,167.99 L484.0,168.36 L485.0,168.74 L486.0,169.11 L487.0,169.48 L488.0,169.85 L489.0,170.22 L490.0,170.59 L491.0,170.97 L492.0,171.34 L493.0,171.71 L494.0,172.08 L495.0,172.45 L496.0,172.82 L497.0,173.20 L498.0,173.57 L499.0,173.94 L500.0,174.31 L501.0,174.68 L502.0,175.05 L503.0,175.43 L504.0,175.80 L505.0,176.17 L506.0,176.54 L507.0,176.91 L508.0,177.28 L509.0,177.66 L510.0,178.03 L511.0,178.40 L512.0,178.77 L513.0,179.14 L514.0,179.51 L515.0,180.08 L516.0,180.84 L517.0,181.61 L518.0,182.38 L519.0,183.13 L520.0,183.85 L521.0,184.54 L522.0,185.20 L523.0,185.84 L524.0,186.46 L525.0,187.08 L526.0,187.69 L527.0,188.31 L528.0,188.93 L529.0,189.56 L530.0,190.18 L531.0,190.80 L532.0,191.41 L533.0,192.02 L534.0,192.61 L535.0,193.19 L536.0,193.76 L537.0,194.31 L538.0,194.84 L539.0,195.36 L540.0,195.87 L541.0,196.37 L542.0,196.86 L543.0,197.35 L544.0,197.82 L545.0,198.29 L546.0,198.75 L547.0,199.21 L548.0,199.67 L549.0,200.12 L550.0,200.56 L551.0,201.01 L552.0,201.45 L553.0,201.88 L554.0,202.31 L555.0,202.74 L556.0,203.16 L557.0,203.58 L558.0,203.99 L559.0,204.40 L560.0,204.81 L561.0,205.21 L562.0,205.61 L563.0,206.00 L564.0,206.39 L565.0,206.78 L566.0,207.16 L567.0,207.54 L568.0,207.92 L569.0,208.30 L570.0,208.67 L571.0,209.04 L572.0,209.41 L573.0,209.78 L574.0,210.15 L575.0,210.51 L576.0,210.87 L577.0,211.23 L578.0,211.58 L579.0,211.93 L580.0,212.27 L581.0,212.62 L582.0,212.96 L583.0,213.29 L584.0,213.62 L585.0,213.95 L586.0,214.27 L587.0,214.58 L588.0,214.90 L589.0,215.20 L590.0,215.50 L591.0,215.80 L592.0,216.09 L593.0,216.38 L594.0,216.66 L595.0,216.94 L596.0,217.21 L597.0,217.48 L598.0,217.75 L599.0,218.01 L600.0,218.26 L601.0,218.51 L602.0,218.76 L603.0,219.00 L604.0,219.24 L605.0,219.47 L606.0,219.70 L607.0,219.93 L608.0,220.15 L609.0,220.38 L610.0,220.60 L611.0,220.82 L612.0,221.03 L613.0,221.24 L614.0,221.45 L615.0,221.64 L616.0,221.83 L617.0,222.01 L618.0,222.19 L619.0,222.35 L620.0,222.50 L621.0,222.64 L622.0,222.77 L623.0,222.90 L624.0,223.01 L625.0,223.13 L626.0,223.23 L627.0,223.34 L628.0,223.44 L629.0,223.54 L630.0,223.64 L631.0,223.74 L632.0,223.84 L633.0,223.94 L634.0,224.04 L635.0,224.15 L636.0,224.27 L637.0,224.39 L638.0,224.51 L639.0,224.65 L640.0,224.79 L641.0,224.94 L642.0,225.09 L643.0,225.25 L644.0,225.41 L645.0,225.58 L646.0,225.75 L647.0,225.93 L648.0,226.10 L649.0,226.28 L650.0,226.46 L651.0,226.64 L652.0,226.82 L653.0,227.00 L654.0,227.18 L655.0,227.35 L656.0,227.53 L657.0,227.70 L658.0,227.86 L659.0,228.03 L660.0,228.19 L661.0,228.34 L662.0,228.49 L663.0,228.63 L664.0,228.77 L665.0,228.89 L666.0,229.01 L667.0,229.13 L668.0,229.24 L669.0,229.36 L670.0,229.48 L671.0,229.59 L672.0,229.71 L673.0,229.82 L674.0,229.93 L675.0,230.05 L676.0,230.15 L677.0,230.26 L678.0,230.37 L679.0,230.47 L680.0,230.56 L681.0,230.66 L682.0,230.75 L683.0,230.84 L684.0,230.92 L685.0,231.00 L686.0,231.07 L687.0,231.14 L688.0,231.20 L689.0,231.26 L690.0,231.31 L691.0,231.35 L692.0,231.39 L693.0,231.42 L694.0,231.45 L695.0,231.48 L696.0,231.51 L697.0,231.54 L698.0,231.56 L699.0,231.59 L700.0,231.61 L701.0,231.63 L702.0,231.66 L703.0,231.68 L704.0,231.70 L705.0,231.71 L706.0,231.73 L707.0,231.75 L708.0,231.76 L709.0,231.78 L710.0,231.79 L711.0,231.81 L712.0,231.82 L713.0,231.83 L714.0,231.84 L715.0,231.85 L716.0,231.86 L717.0,231.87 L718.0,231.88 L719.0,231.89 L720.0,231.90 L721.0,231.90 L722.0,231.91 L723.0,231.92 L724.0,231.93 L725.0,231.94 L726.0,231.94 L727.0,231.95 L728.0,231.96 L729.0,231.96 L730.0,231.97 L731.0,231.97 L732.0,231.98 L733.0,231.98 L734.0,231.99 L735.0,231.99 L736.0,231.99 L737.0,232.00 L738.0,232.00 L739.0,232.00 L740.0,232.00 L741.0,232.00 L742.0,232.00 L743.0,232.00 L744.0,232.00 L745.0,232.00 L746.0,232.00 L747.0,232.00 L748.0,232.00 L749.0,232.00 L750.0,232.00 L751.0,232.00 L752.0,232.00 L753.0,232.00 L754.0,232.00 L755.0,232.00 L756.0,232.00 L757.0,232.00 L758.0,232.00 L759.0,232.00 L760.0,232.00 L761.0,232.00 L762.0,232.00 L763.0,232.00 L764.0,232.00 L765.0,232.00 L766.0,232.00 L767.0,232.00 L768.0,232.00 L769.0,232.00 L770.0,232.00 L771.0,232.00 L772.0,232.00 L773.0,232.00 L774.0,232.00 L775.0,232.00 L776.0,232.00 L777.0,232.00 L778.0,232.00 L779.0,232.00 L780.0,232.00 L781.0,232.00 L782.0,232.00 L783.0,232.00 L784.0,232.00 L785.0,232.00 L786.0,232.00 L787.0,232.00 L788.0,232.00 L789.0,232.00 L790.0,232.00 L791.0,232.00 L792.0,232.00 L793.0,232.00 L794.0,232.00 L795.0,232.00 L796.0,232.00 L797.0,232.00 L798.0,232.00 L799.0,232.00 L800.0,232.00 L801.0,232.00 L802.0,232.00 L803.0,232.00 L804.0,232.00 L805.0,232.00 L806.0,232.00 L807.0,232.00 L808.0,232.00 L809.0,232.00 L810.0,232.00 L811.0,232.00 L812.0,232.00 L813.0,232.00 L814.0,232.00 L815.0,232.00 L816.0,232.00 L817.0,232.00 L818.0,232.00 L819.0,232.00 L820.0,232.00 L821.0,232.00 L822.0,232.00 L823.0,232.00 L824.0,232.00 L825.0,232.00 L826.0,232.00 L827.0,232.00 L828.0,232.00 L829.0,232.00 L830.0,232.00 L831.0,232.00 L832.0,232.00 L833.0,232.00 L834.0,232.00 L835.0,232.00 L836.0,232.00 L837.0,232.00 L838.0,232.00 L839.0,232.00 L840.0,232.00 L841.0,232.00 L842.0,232.00 L843.0,232.00 L844.0,232.00 L845.0,232.00 L846.0,232.00 L847.0,232.00 L848.0,232.00 L849.0,232.00 L850.0,232.00 L851.0,232.00 L852.0,232.00 L853.0,232.00 L854.0,232.00 L855.0,232.00 L856.0,232.00 L857.0,232.00 L858.0,232.00 L859.0,232.00 L860.0,232.00 L861.0,232.00 L862.0,232.00 L863.0,232.00 L864.0,232.00 L865.0,232.00 L866.0,232.00 L867.0,232.00 L868.0,232.00 L869.0,232.00 L870.0,232.00 L871.0,232.00 L872.0,232.00 L873.0,232.00 L874.0,232.00 L875.0,232.00 L876.0,232.00 L877.0,232.00 L878.0,232.00 L879.0,232.00 L880.0,232.00 L881.0,232.00 L882.0,232.00 L883.0,232.00 L884.0,232.00 L885.0,232.00 L886.0,232.00 L887.0,232.00 L888.0,232.00 L889.0,232.00 L890.0,232.00 L891.0,232.00 L892.0,232.00 L893.0,232.00 L894.0,232.00 L895.0,232.00 L896.0,232.00 L897.0,232.00 L898.0,232.00 L899.0,232.00 L900.0,232.00 L901.0,232.00 L902.0,232.00 L903.0,232.00 L904.0,232.00 L905.0,232.00 L906.0,232.00 L907.0,232.00 L908.0,232.00 L909.0,232.00 L910.0,232.00 L911.0,232.00 L912.0,232.00 L913.0,232.00 L914.0,232.00 L915.0,232.00 L916.0,232.00 L917.0,232.00 L918.0,232.00 L919.0,232.00 L920.0,232.00 L921.0,232.00 L922.0,232.00 L923.0,232.00 L924.0,232.00 L925.0,232.00 L926.0,232.00 L927.0,232.00 L928.0,232.00 L929.0,232.00 L930.0,232.00 L931.0,232.00 L932.0,232.00 L933.0,232.00 L934.0,232.00 L935.0,232.00 L936.0,232.00 L937.0,232.00 L938.0,232.00 L939.0,232.00 L940.0,232.00 L941.0,232.00 L942.0,232.00 L943.0,232.00 L944.0,232.00 L945.0,232.00 L946.0,232.00 L947.0,232.00 L948.0,232.00 L949.0,232.00 L950.0,232.00 L951.0,232.00 L952.0,232.00 L953.0,232.00 L954.0,232.00 L955.0,232.00 L956.0,232.00 L957.0,232.00 L958.0,232.00 L959.0,232.00 L960.0,232.00 L961.0,232.00 L962.0,232.00 L963.0,232.00 L964.0,232.00 L965.0,232.00 L966.0,232.00 L967.0,232.00 L968.0,232.00 L969.0,232.00 L970.0,232.00 L971.0,232.00 L972.0,232.00 L973.0,232.00 L974.0,232.00 L975.0,232.00 L976.0,232.00 L977.0,232.00 L978.0,232.00 L979.0,232.00 L980.0,232.00 L981.0,232.00 L982.0,232.00 L983.0,232.00 L984.0,232.00 L985.0,232.00 L986.0,232.00 L987.0,232.00 L988.0,232.00 L989.0,232.00 L990.0,232.00 L991.0,232.00 L992.0,232.00 L993.0,232.00 L994.0,232.00 L995.0,232.00 L996.0,232.00 L997.0,232.00 L998.0,232.00 L999.0,232.00 L1000.0,232.00 L1001.0,232.00 L1002.0,232.00 L1003.0,232.00 L1004.0,232.00 L1005.0,231.99 L1006.0,231.99 L1007.0,231.99 L1008.0,231.98 L1009.0,231.98 L1010.0,231.97 L1011.0,231.97 L1012.0,231.96 L1013.0,231.95 L1014.0,231.95 L1015.0,231.94 L1016.0,231.93 L1017.0,231.92 L1018.0,231.91 L1019.0,231.91 L1020.0,231.90 L1021.0,231.89 L1022.0,231.88 L1023.0,231.87 L1024.0,231.85 L1025.0,231.84 L1026.0,231.83 L1027.0,231.82 L1028.0,231.81 L1029.0,231.79 L1030.0,231.78 L1031.0,231.77 L1032.0,231.75 L1033.0,231.74 L1034.0,231.73 L1035.0,231.71 L1036.0,231.70 L1037.0,231.68 L1038.0,231.67 L1039.0,231.65 L1040.0,231.64 L1041.0,231.62 L1042.0,231.61 L1043.0,231.59 L1044.0,231.57 L1045.0,231.55 L1046.0,231.53 L1047.0,231.50 L1048.0,231.47 L1049.0,231.44 L1050.0,231.41 L1051.0,231.38 L1052.0,231.34 L1053.0,231.31 L1054.0,231.27 L1055.0,231.23 L1056.0,231.19 L1057.0,231.15 L1058.0,231.11 L1059.0,231.06 L1060.0,231.02 L1061.0,230.98 L1062.0,230.93 L1063.0,230.89 L1064.0,230.85 L1065.0,230.81 L1066.0,230.76 L1067.0,230.72 L1068.0,230.68 L1069.0,230.64 L1070.0,230.60 L1071.0,230.56 L1072.0,230.52 L1073.0,230.47 L1074.0,230.43 L1075.0,230.39 L1076.0,230.34 L1077.0,230.30 L1078.0,230.25 L1079.0,230.21 L1080.0,230.16 L1081.0,230.11 L1082.0,230.06 L1083.0,230.00 L1084.0,229.95 L1085.0,229.89 L1086.0,229.83 L1087.0,229.77 L1088.0,229.70 L1089.0,229.63 L1090.0,229.55 L1091.0,229.47 L1092.0,229.39 L1093.0,229.30 L1094.0,229.21 L1095.0,229.12 L1096.0,229.02 L1097.0,228.93 L1098.0,228.83 L1099.0,228.73 L1100.0,228.63 L1101.0,228.54 L1102.0,228.44 L1103.0,228.34 L1104.0,228.24 L1105.0,228.14 L1106.0,228.04 L1107.0,227.93 L1108.0,227.82 L1109.0,227.71 L1110.0,227.60 L1111.0,227.49 L1112.0,227.38 L1113.0,227.27 L1114.0,227.16 L1115.0,227.05 L1116.0,226.95 L1117.0,226.84 L1118.0,226.73 L1119.0,226.62 L1120.0,226.52 L1121.0,226.41 L1122.0,226.30 L1123.0,226.19 L1124.0,226.08 L1125.0,225.97 L1126.0,225.86 L1127.0,225.75 L1128.0,225.63 L1129.0,225.52 L1130.0,225.40 L1131.0,225.28 L1132.0,225.16 L1133.0,225.04 L1134.0,224.92 L1135.0,224.80 L1136.0,224.68 L1137.0,224.56 L1138.0,224.44 L1139.0,224.32 L1140.0,224.21 L1141.0,224.09 L1142.0,223.98 L1143.0,223.86 L1144.0,223.73 L1145.0,223.61 L1146.0,223.47 L1147.0,223.33 L1148.0,223.18 L1149.0,223.03 L1150.0,222.88 L1151.0,222.72 L1152.0,222.56 L1153.0,222.39 L1154.0,222.22 L1155.0,222.05 L1156.0,221.87 L1157.0,221.70 L1158.0,221.51 L1159.0,221.33 L1160.0,221.14 L1161.0,220.95 L1162.0,220.76 L1163.0,220.57 L1164.0,220.37 L1165.0,220.17 L1166.0,219.97 L1167.0,219.77 L1168.0,219.56 L1169.0,219.36 L1170.0,219.15 L1171.0,218.94 L1172.0,218.73 L1173.0,218.52 L1174.0,218.30 L1175.0,218.09 L1176.0,217.87 L1177.0,217.66 L1178.0,217.44 L1179.0,217.22 L1180.0,217.00 L1181.0,216.78 L1182.0,216.55 L1183.0,216.32 L1184.0,216.09 L1185.0,215.86 L1186.0,215.62 L1187.0,215.38 L1188.0,215.13 L1189.0,214.88 L1190.0,214.63 L1191.0,214.38 L1192.0,214.13 L1193.0,213.87 L1194.0,213.61 L1195.0,213.35 L1196.0,213.09 L1197.0,212.82 L1198.0,212.56 L1199.0,212.29 L1200.0,212.02 L1201.0,211.76 L1202.0,211.49 L1203.0,211.22 L1204.0,210.95 L1205.0,210.68 L1206.0,210.41 L1207.0,210.14 L1208.0,209.86 L1209.0,209.59 L1210.0,209.31 L1211.0,209.03 L1212.0,208.74 L1213.0,208.46 L1214.0,208.17 L1215.0,207.88 L1216.0,207.60" fill="none" stroke="#0a6e0a" stroke-width="2.5"/>
</g>
<rect x="412" y="90" width="1" height="397" fill="#1414a0"/>
</svg>
<div class="t" style="left:1.5px;width:400px;text-align:right;top:473.56px;font-size:11px;line-height:14px;color:#000;font-weight:400;letter-spacing:0px;">-60</div>
<div class="t" style="left:1.5px;width:400px;text-align:right;top:415.06px;font-size:11px;line-height:14px;color:#000;font-weight:400;letter-spacing:0px;">-30</div>
<div class="t" style="left:1.5px;width:400px;text-align:right;top:356.56px;font-size:11px;line-height:14px;color:#000;font-weight:400;letter-spacing:0px;">0</div>
<div class="t" style="left:1.5px;width:400px;text-align:right;top:298.06px;font-size:11px;line-height:14px;color:#000;font-weight:400;letter-spacing:0px;">30</div>
<div class="t" style="left:1.5px;width:400px;text-align:right;top:239.56px;font-size:11px;line-height:14px;color:#000;font-weight:400;letter-spacing:0px;">60</div>
<div class="t" style="left:1.5px;width:400px;text-align:right;top:181.06px;font-size:11px;line-height:14px;color:#000;font-weight:400;letter-spacing:0px;">90</div>
<div class="t" style="left:1.5px;width:400px;text-align:right;top:122.56px;font-size:11px;line-height:14px;color:#000;font-weight:400;letter-spacing:0px;">120</div>
<div class="t" style="left:1.5px;width:400px;text-align:right;top:74.36px;font-size:11px;line-height:14px;color:#000;font-weight:400;letter-spacing:0px;">dB</div>
<div class="t" style="left:240.31397105253018px;width:400px;text-align:center;top:486.36px;font-size:11px;line-height:14px;color:#000;font-weight:400;letter-spacing:0px;">3,00</div>
<div class="t" style="left:284.7791159381365px;width:400px;text-align:center;top:486.36px;font-size:11px;line-height:14px;color:#000;font-weight:400;letter-spacing:0px;">5,00</div>
<div class="t" style="left:314.0675581291257px;width:400px;text-align:center;top:486.36px;font-size:11px;line-height:14px;color:#000;font-weight:400;letter-spacing:0px;">7,00</div>
<div class="t" style="left:345.1145579690683px;width:400px;text-align:center;top:486.36px;font-size:11px;line-height:14px;color:#000;font-weight:400;letter-spacing:0px;">10</div>
<div class="t" style="left:405.45000000000005px;width:400px;text-align:center;top:486.36px;font-size:11px;line-height:14px;color:#000;font-weight:400;letter-spacing:0px;">20</div>
<div class="t" style="left:440.74397105253024px;width:400px;text-align:center;top:486.36px;font-size:11px;line-height:14px;color:#000;font-weight:400;letter-spacing:0px;">30</div>
<div class="t" style="left:465.7854420309318px;width:400px;text-align:center;top:486.36px;font-size:11px;line-height:14px;color:#000;font-weight:400;letter-spacing:0px;">40</div>
<div class="t" style="left:501.079413083462px;width:400px;text-align:center;top:486.36px;font-size:11px;line-height:14px;color:#000;font-weight:400;letter-spacing:0px;">60</div>
<div class="t" style="left:526.1208840618635px;width:400px;text-align:center;top:486.36px;font-size:11px;line-height:14px;color:#000;font-weight:400;letter-spacing:0px;">80</div>
<div class="t" style="left:545.5445579690683px;width:400px;text-align:center;top:486.36px;font-size:11px;line-height:14px;color:#000;font-weight:400;letter-spacing:0px;">100</div>
<div class="t" style="left:605.88px;width:400px;text-align:center;top:486.36px;font-size:11px;line-height:14px;color:#000;font-weight:400;letter-spacing:0px;">200</div>
<div class="t" style="left:641.1739710525302px;width:400px;text-align:center;top:486.36px;font-size:11px;line-height:14px;color:#000;font-weight:400;letter-spacing:0px;">300</div>
<div class="t" style="left:666.2154420309317px;width:400px;text-align:center;top:486.36px;font-size:11px;line-height:14px;color:#000;font-weight:400;letter-spacing:0px;">400</div>
<div class="t" style="left:701.509413083462px;width:400px;text-align:center;top:486.36px;font-size:11px;line-height:14px;color:#000;font-weight:400;letter-spacing:0px;">600</div>
<div class="t" style="left:726.5508840618635px;width:400px;text-align:center;top:486.36px;font-size:11px;line-height:14px;color:#000;font-weight:400;letter-spacing:0px;">800</div>
<div class="t" style="left:745.9745579690682px;width:400px;text-align:center;top:486.36px;font-size:11px;line-height:14px;color:#000;font-weight:400;letter-spacing:0px;">1k</div>
<div class="t" style="left:806.31px;width:400px;text-align:center;top:486.36px;font-size:11px;line-height:14px;color:#000;font-weight:400;letter-spacing:0px;">2,00k</div>
<div class="t" style="left:866.6454420309319px;width:400px;text-align:center;top:486.36px;font-size:11px;line-height:14px;color:#000;font-weight:400;letter-spacing:0px;">4,00k</div>
<div class="t" style="left:915.3575581291257px;width:400px;text-align:center;top:486.36px;font-size:11px;line-height:14px;color:#000;font-weight:400;letter-spacing:0px;">7,00k</div>
<div class="t" style="left:946.4045579690683px;width:400px;text-align:center;top:486.36px;font-size:11px;line-height:14px;color:#000;font-weight:400;letter-spacing:0px;">10k</div>
<div class="t" style="left:1006.74px;width:400px;text-align:center;top:486.36px;font-size:11px;line-height:14px;color:#000;font-weight:400;letter-spacing:0px;">20k</div>
<div class="t" style="left:206.51999999999998px;width:400px;text-align:center;top:486.36px;font-size:11px;line-height:14px;color:#000;font-weight:400;letter-spacing:0px;">2,00</div>
<div style="position:absolute;left:399px;top:486px;width:26px;height:14px;background:#fff;border:1px solid #1414a0;box-sizing:border-box"></div>
<div class="t" style="left:212px;width:400px;text-align:center;top:486.36px;font-size:11px;line-height:14px;color:#1414a0;font-weight:400;letter-spacing:0px;">2,17</div>
<svg style="position:absolute;left:346px;top:70px" width="30" height="460">
 <circle cx="12" cy="11" r="4.6" fill="#f0f2fa" stroke="#9a9a9a" stroke-width="1"/>
 <path d="M15 14.5 L21.5 21" stroke="#1a1a1a" stroke-width="1.8"/>
 <path d="M8 21.5 L20 21.5" stroke="#c8c8c8" stroke-width="1"/>
 <circle cx="10" cy="19.7" r="2.9" fill="#1a3a9a"/>
 <path d="M8.3 19.7 H11.7 M10 18 V21.4" stroke="#fff" stroke-width="1"/>
 <circle cx="12" cy="33.3" r="4.6" fill="#a8a8a8" stroke="#9a9a9a" stroke-width="1"/>
 <path d="M15 37 L21.5 43.5" stroke="#8a8a8a" stroke-width="1.8"/>
 <path d="M8 44 L20 44" stroke="#c8c8c8" stroke-width="1"/>
 <circle cx="10" cy="42" r="2.9" fill="#949494"/>
</svg>
<div style="position:absolute;left:353px;top:119px;width:16px;height:384px;background:linear-gradient(to right,#e8e8e8,#f0f0f0 50%,#e4e4e4)"></div>
<svg style="position:absolute;left:353px;top:119px" width="16" height="384"><path d="M5 10 L8 7 L11 10 Z" fill="#333"/><path d="M5 374 L8 377 L11 374 Z" fill="#333"/></svg>
<svg style="position:absolute;left:354px;top:506px" width="15" height="15">
 <defs><linearGradient id="sv" x1="0" y1="0" x2="1" y2="1"><stop offset="0" stop-color="#7a7ae0"/><stop offset="1" stop-color="#3a3a98"/></linearGradient></defs>
 <rect x="0" y="0" width="14" height="14" rx="1.2" fill="url(#sv)"/>
 <rect x="2.5" y="0.8" width="9" height="5.6" fill="#f4f6ff"/>
 <rect x="3.5" y="9" width="7" height="5" fill="#3a3a88"/>
 <rect x="5.5" y="10.5" width="2.5" height="2.5" fill="#e8e8f8"/>
</svg>
<div style="position:absolute;left:372px;top:506px;width:842px;height:16px;background:linear-gradient(#e4e4e4,#eeeeee 50%,#e2e2e2)"></div>
<svg style="position:absolute;left:372px;top:506px" width="20" height="16"><path d="M10 5 L7 8 L10 11 Z" fill="#333"/></svg>
<div style="position:absolute;left:1212px;top:509px;width:2px;height:9px;background:#111"></div>
<div style="position:absolute;left:493px;top:532px;width:13px;height:13px;background:linear-gradient(135deg,#d4d8e4,#f8f8fa);border:1px solid #7c7c7c;box-sizing:border-box"></div>
<svg style="position:absolute;left:493px;top:532px" width="13" height="13"><path d="M3.6 6.4 L5.8 9.6 L9.8 2.8" fill="none" stroke="#3a4478" stroke-width="1.9"/></svg>
<div class="t" style="left:509px;top:532.36px;font-size:11px;line-height:14px;color:#207020;font-weight:400;letter-spacing:-0.18px;">joulu 30 13:13:48</div>
<div class="t" style="left:269px;width:400px;text-align:right;top:532.36px;font-size:11px;line-height:14px;color:#207020;font-weight:400;letter-spacing:0px;">113,5dB</div>
<div style="position:absolute;left:595px;top:538px;width:14px;height:2px;background:#007000"></div>
<div class="t" style="left:671px;top:532.36px;font-size:11px;line-height:14px;color:#000;font-weight:400;letter-spacing:0px;">C<sup style="font-size:8px;vertical-align:4px;line-height:0">-1</sup></div>
<div style="position:absolute;left:493px;top:559px;width:13px;height:13px;background:linear-gradient(135deg,#d4d8e4,#f8f8fa);border:1px solid #7c7c7c;box-sizing:border-box"></div>
<svg style="position:absolute;left:493px;top:559px" width="13" height="13"><path d="M3.6 6.4 L5.8 9.6 L9.8 2.8" fill="none" stroke="#3a4478" stroke-width="1.9"/></svg>
<div class="t" style="left:509px;top:559.36px;font-size:11px;line-height:14px;color:#3a8a2a;font-weight:400;letter-spacing:0px;">Corrected</div>
<div class="t" style="left:269px;width:400px;text-align:right;top:559.36px;font-size:11px;line-height:14px;color:#3a8a2a;font-weight:400;letter-spacing:0px;">113,5dB</div>
<svg style="position:absolute;left:595px;top:565px" width="14" height="2"><path d="M0 1 H14" stroke="#207020" stroke-width="2" stroke-dasharray="3 2"/></svg>
<div class="t" style="left:671px;top:559.36px;font-size:11px;line-height:14px;color:#000;font-weight:400;letter-spacing:0px;">C<sup style="font-size:8px;vertical-align:4px;line-height:0">-1</sup></div>
<div style="position:absolute;left:493px;top:586px;width:13px;height:13px;background:linear-gradient(135deg,#d4d8e4,#f8f8fa);border:1px solid #7c7c7c;box-sizing:border-box"></div>
<svg style="position:absolute;left:493px;top:586px" width="13" height="13"><path d="M3.6 6.4 L5.8 9.6 L9.8 2.8" fill="none" stroke="#3a4478" stroke-width="1.9"/></svg>
<div class="t" style="left:509px;top:586.36px;font-size:11px;line-height:14px;color:#2020a0;font-weight:400;letter-spacing:0px;">Target</div>
<div class="t" style="left:269px;width:400px;text-align:right;top:586.36px;font-size:11px;line-height:14px;color:#2020a0;font-weight:400;letter-spacing:0px;">75,0dB</div>
<div style="position:absolute;left:595px;top:592px;width:14px;height:2px;background:#1c1cd8"></div>
<div style="position:absolute;left:493px;top:613px;width:13px;height:13px;background:linear-gradient(135deg,#d4d8e4,#f8f8fa);border:1px solid #7c7c7c;box-sizing:border-box"></div>
<div class="t" style="left:509px;top:613.36px;font-size:11px;line-height:14px;color:#40b8c0;font-weight:400;letter-spacing:0px;">Filters</div>
<div class="t" style="left:269px;width:400px;text-align:right;top:613.36px;font-size:11px;line-height:14px;color:#40b8c0;font-weight:400;letter-spacing:0px;">0,0dB</div>
<div style="position:absolute;left:493px;top:640px;width:13px;height:13px;background:linear-gradient(135deg,#d4d8e4,#f8f8fa);border:1px solid #7c7c7c;box-sizing:border-box"></div>
<div class="t" style="left:509px;top:640.36px;font-size:11px;line-height:14px;color:#308080;font-weight:400;letter-spacing:-0.09px;">Filters+Target</div>
<div class="t" style="left:269px;width:400px;text-align:right;top:640.36px;font-size:11px;line-height:14px;color:#308080;font-weight:400;letter-spacing:0px;">75,0dB</div>
<div style="position:absolute;left:703px;top:527px;width:1px;height:130px;background:#a0a0a0"></div>
<div style="position:absolute;left:923px;top:527px;width:1px;height:130px;background:#a0a0a0"></div>
<div style="position:absolute;left:713px;top:532px;width:13px;height:13px;background:linear-gradient(135deg,#d4d8e4,#f8f8fa);border:1px solid #7c7c7c;box-sizing:border-box"></div>
<svg style="position:absolute;left:713px;top:532px" width="13" height="13"><path d="M3.6 6.4 L5.8 9.6 L9.8 2.8" fill="none" stroke="#3a4478" stroke-width="1.9"/></svg>
<div class="t" style="left:729.5px;top:532.36px;font-size:11px;line-height:14px;color:#000;font-weight:400;letter-spacing:-0.3px;">Mic/Meter Cal</div>
<div style="position:absolute;left:813px;top:538px;width:16px;height:2px;background:#000"></div>
<div class="t" style="left:488.5px;width:400px;text-align:right;top:532.36px;font-size:11px;line-height:14px;color:#000;font-weight:400;letter-spacing:0px;">-46,5dB</div>
<div style="position:absolute;left:713px;top:559px;width:13px;height:13px;background:linear-gradient(135deg,#d4d8e4,#f8f8fa);border:1px solid #7c7c7c;box-sizing:border-box"></div>
<svg style="position:absolute;left:713px;top:559px" width="13" height="13"><path d="M3.6 6.4 L5.8 9.6 L9.8 2.8" fill="none" stroke="#3a4478" stroke-width="1.9"/></svg>
<div class="t" style="left:729.5px;top:559.36px;font-size:11px;line-height:14px;color:#000;font-weight:400;letter-spacing:-0.12px;">Soundcard Cal</div>
<svg style="position:absolute;left:813px;top:565px" width="13" height="2"><path d="M0 1 H13" stroke="#000" stroke-width="2" stroke-dasharray="3 2"/></svg>
<div class="t" style="left:488.5px;width:400px;text-align:right;top:559.36px;font-size:11px;line-height:14px;color:#000;font-weight:400;letter-spacing:0px;">-6,0dB</div>
<div style="position:absolute;left:933px;top:532px;width:13px;height:13px;background:linear-gradient(135deg,#d4d8e4,#f8f8fa);border:1px solid #7c7c7c;box-sizing:border-box"></div>
<div class="t" style="left:950px;top:532.36px;font-size:11px;line-height:14px;color:#000;font-weight:400;letter-spacing:0px;">Invert filter responses</div>
<div class="t" style="left:1px;top:674.36px;font-size:11px;line-height:14px;color:#000;font-weight:400;letter-spacing:-0.2px;">34,5/57,0MB</div>
<div style="position:absolute;left:86px;top:668px;width:1px;height:26px;background:#b8b5a6"></div>
<div class="t" style="left:90.5px;top:674.36px;font-size:11px;line-height:14px;color:#000;font-weight:400;letter-spacing:-0.25px;">48000Hz</div>
<div style="position:absolute;left:139px;top:668px;width:1px;height:26px;background:#b8b5a6"></div>
<div class="t" style="left:143.5px;top:674.36px;font-size:11px;line-height:14px;color:#000;font-weight:400;letter-spacing:-0.25px;">16Bit</div>
<div style="position:absolute;left:173px;top:668px;width:1px;height:26px;background:#b8b5a6"></div>
<div style="position:absolute;left:940px;top:668px;width:1px;height:26px;background:#a8a596"></div>
<div style="position:absolute;left:941px;top:668px;width:1px;height:26px;background:#f8f6ee"></div>
<div style="position:absolute;left:1149px;top:668px;width:1px;height:26px;background:#a8a596"></div>
<div style="position:absolute;left:1150px;top:668px;width:1px;height:26px;background:#f8f6ee"></div>
</body></html>
